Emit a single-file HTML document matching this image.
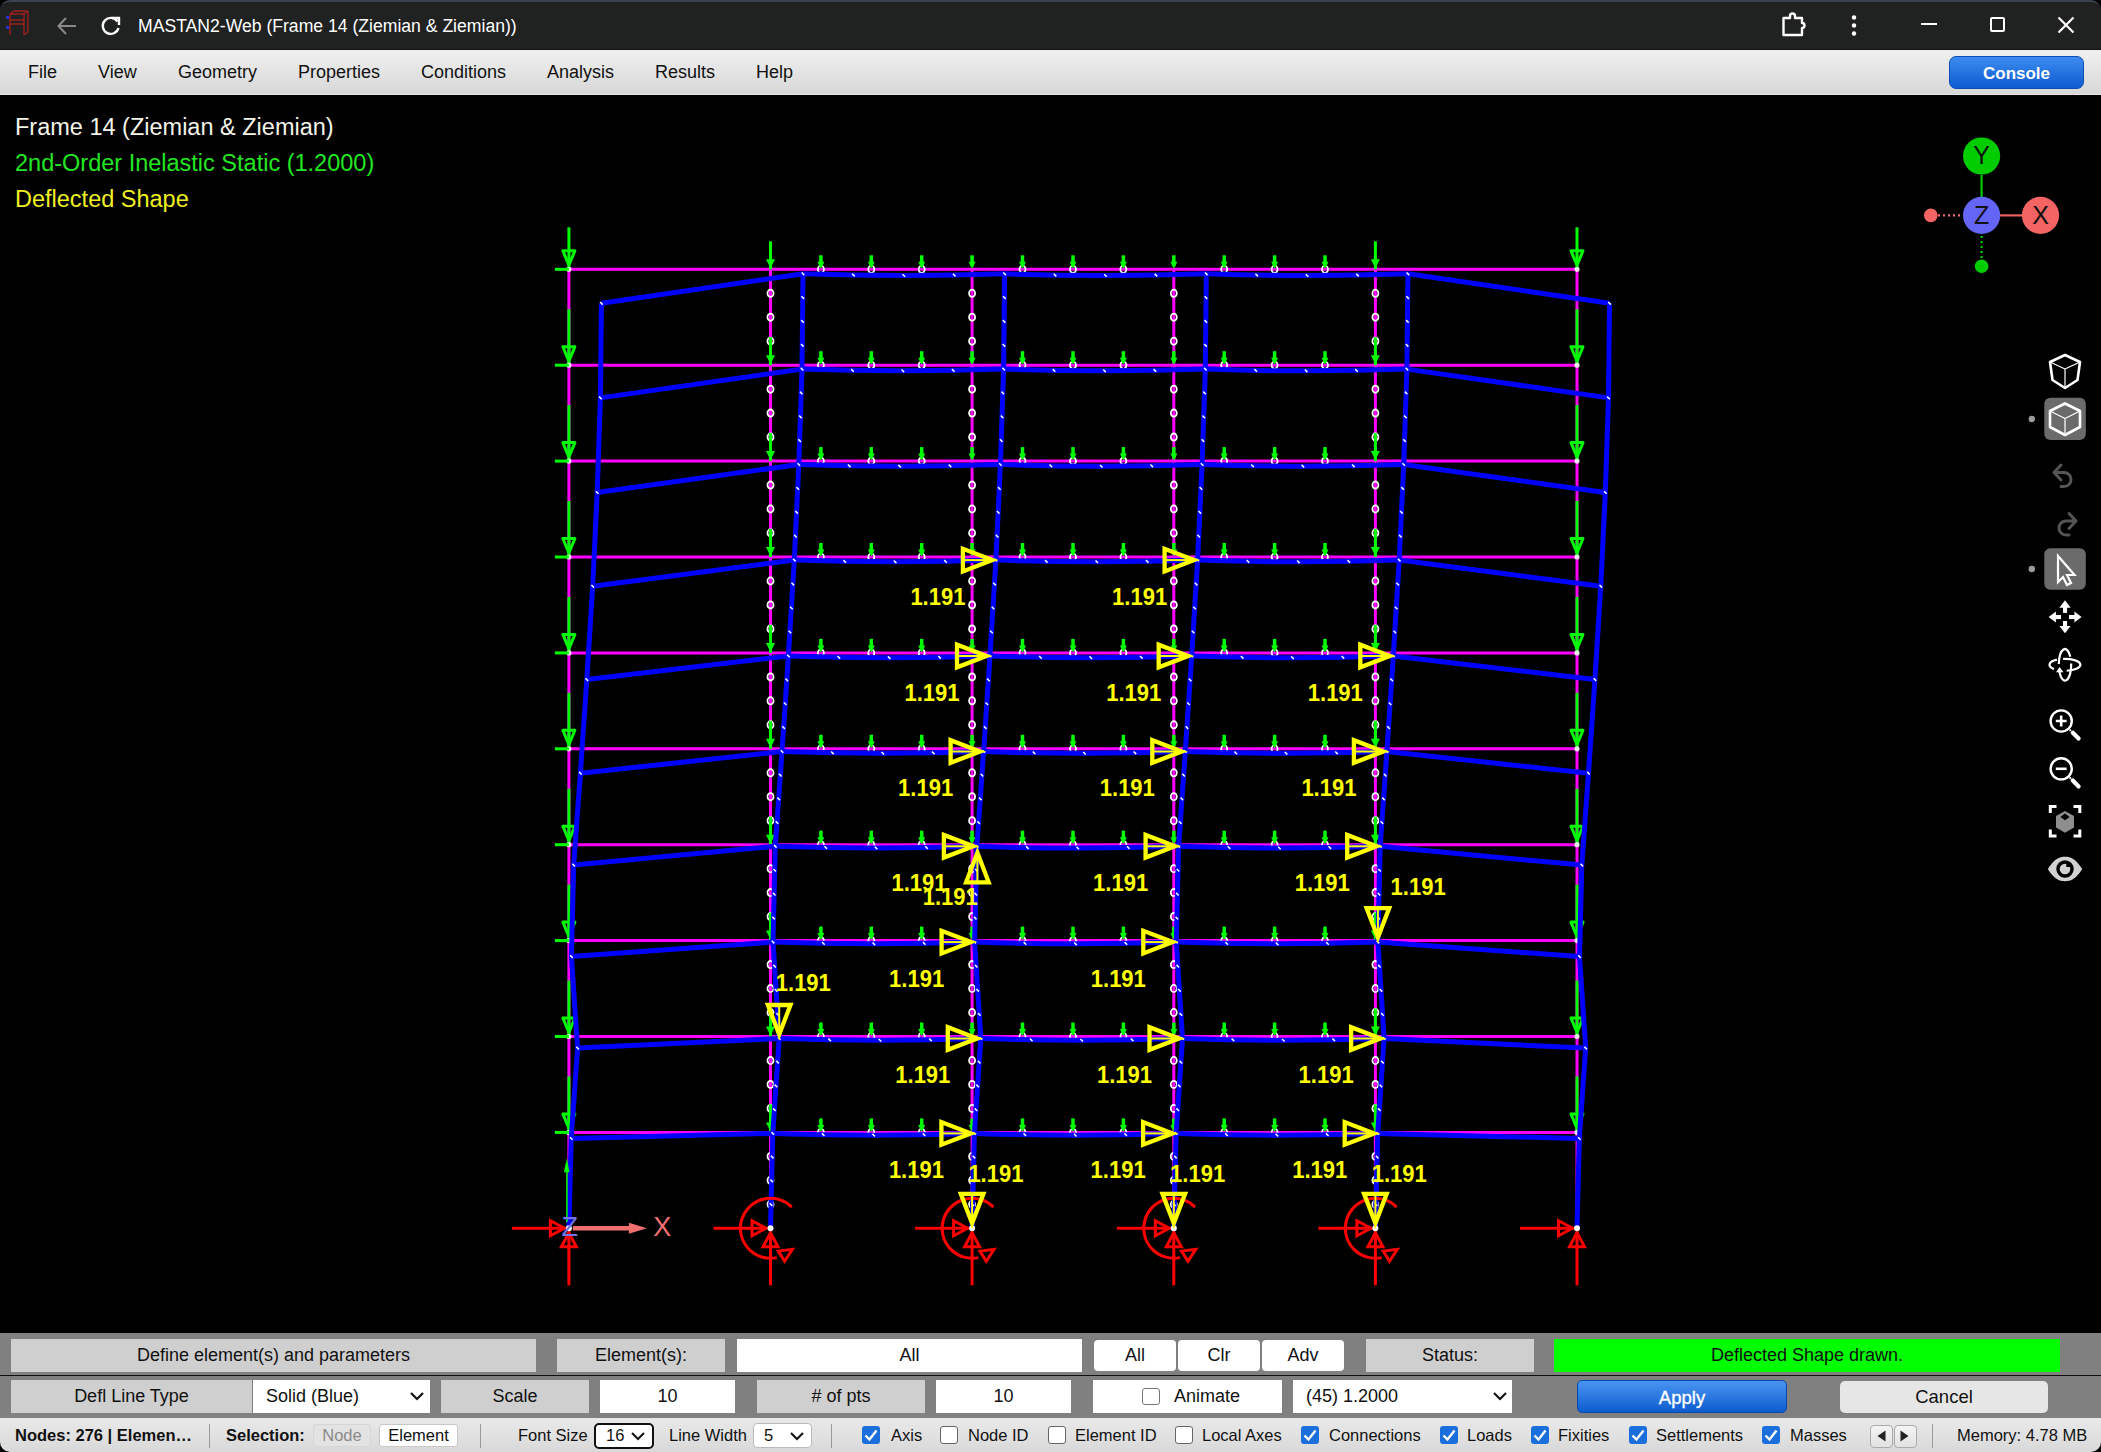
<!DOCTYPE html>
<html><head><meta charset="utf-8"><title>MASTAN2-Web</title>
<style>
*{box-sizing:border-box}
html,body{margin:0;padding:0}
body{width:2101px;height:1452px;overflow:hidden;background:#000;position:relative;font-family:"Liberation Sans",sans-serif}
.a{position:absolute}
#titlebar{left:0;top:0;width:2101px;height:50px;background:#202121;border-top:2px solid #3b4350;border-radius:10px 10px 0 0}
#tbline{left:0;top:49px;width:2101px;height:1px;background:#141414}
#title{left:138px;top:16px;color:#fff;font-size:17.6px;white-space:nowrap}
#menubar{left:0;top:50px;width:2101px;height:45px;background:linear-gradient(#f0f0f0,#d7d7d7);border-bottom:1px solid #e6e6e6}
.mi{position:absolute;top:12px;font-size:18px;color:#111;white-space:nowrap}
#console{left:1949px;top:56px;width:135px;height:33px;border-radius:7px;background:linear-gradient(#3d8bf0,#0d5bd0);border:1px solid #0b4fb5;color:#fff;font-weight:bold;font-size:17px;text-align:center;line-height:34px}
.info{position:absolute;left:15px;font-size:23.5px;white-space:nowrap}
#panel{left:0;top:1333px;width:2101px;height:85px;background:#808080}
#pline{left:0;top:1374.8px;width:2101px;height:1.4px;background:#111}
.cell{position:absolute;background:#cfcfcf;font-size:18px;color:#111;text-align:center;white-space:nowrap}
.inp{position:absolute;background:#fff;font-size:18px;color:#111;text-align:center;white-space:nowrap}
.btn{position:absolute;background:#fff;border-radius:4px;font-size:18px;color:#111;text-align:center;white-space:nowrap}
#status{left:0;top:1418px;width:2101px;height:34px;background:linear-gradient(#e9e9e9,#d9d9d9);border-radius:0 0 10px 10px}
.st{position:absolute;font-size:16.5px;color:#111;white-space:nowrap;top:1426px}
.cb{position:absolute;top:1426px;width:18px;height:18px;border-radius:3px;background:#1a6fdc}
.cbo{position:absolute;top:1426px;width:18px;height:18px;border-radius:3px;background:#fff;border:1.5px solid #666}
.sep{position:absolute;top:1424px;width:1px;height:24px;background:#9a9a9a}
</style></head>
<body>
<div id="titlebar" class="a"></div>
<div id="tbline" class="a"></div>
<!-- app icon -->
<svg class="a" style="left:6px;top:10px" width="26" height="28" viewBox="0 0 26 28">
<g stroke="#9c2020" stroke-width="1.4" fill="none">
<path d="M4 4 L18 4 L22 1 M18 4 L18 25 M4 4 L4 25 M4 14 L18 14 M4 10 L18 10 M22 1 L22 22 L18 25 M4 4 L8 1 L22 1"/>
</g>
<rect x="0" y="6" width="3" height="3" fill="#2233cc"/><rect x="0" y="16" width="3" height="3" fill="#2233cc"/>
</svg>
<!-- back arrow -->
<svg class="a" style="left:56px;top:16px" width="22" height="20" viewBox="0 0 22 20">
<path d="M20 10 H3 M10 2 L2.5 10 L10 18" stroke="#8a8a8a" stroke-width="2" fill="none"/>
</svg>
<!-- reload -->
<svg class="a" style="left:99px;top:15px" width="24" height="22" viewBox="0 0 24 22">
<path d="M18.5 6.5 A8 8 0 1 0 19.5 13" stroke="#fff" stroke-width="2.4" fill="none"/>
<path d="M13 3 H20 V10" stroke="#fff" stroke-width="2.4" fill="none"/>
</svg>
<div id="title" class="a">MASTAN2-Web (Frame 14 (Ziemian &amp; Ziemian))</div>
<!-- extensions icon -->
<svg class="a" style="left:1780px;top:11px" width="30" height="28" viewBox="0 0 30 28">
<path d="M3.5 7 H10 V5 A2.5 2.5 0 0 1 15 5 V7 H22 V12 A2.5 2.5 0 0 1 22 17 V24 H3.5 V17 A0 0 0 0 0 3.5 17 V7 Z" stroke="#fff" stroke-width="2.4" fill="none" stroke-linejoin="round"/>
</svg>
<!-- kebab -->
<svg class="a" style="left:1846px;top:14px" width="16" height="24" viewBox="0 0 16 24">
<circle cx="8" cy="3.5" r="2.2" fill="#fff"/><circle cx="8" cy="11.5" r="2.2" fill="#fff"/><circle cx="8" cy="19.5" r="2.2" fill="#fff"/>
</svg>
<!-- min max close -->
<div class="a" style="left:1921px;top:23px;width:16px;height:2px;background:#fff"></div>
<div class="a" style="left:1990px;top:17px;width:15px;height:15px;border:2px solid #fff;border-radius:2px"></div>
<svg class="a" style="left:2057px;top:16px" width="18" height="18" viewBox="0 0 18 18"><path d="M1.5 1.5 L16.5 16.5 M16.5 1.5 L1.5 16.5" stroke="#fff" stroke-width="2.2"/></svg>

<div id="menubar" class="a">
<span class="mi" style="left:28px">File</span>
<span class="mi" style="left:98px">View</span>
<span class="mi" style="left:178px">Geometry</span>
<span class="mi" style="left:298px">Properties</span>
<span class="mi" style="left:421px">Conditions</span>
<span class="mi" style="left:547px">Analysis</span>
<span class="mi" style="left:655px">Results</span>
<span class="mi" style="left:756px">Help</span>
</div>
<div id="console" class="a">Console</div>

<div class="info" style="top:113.5px;color:#f4f4e8">Frame 14 (Ziemian &amp; Ziemian)</div>
<div class="info" style="top:149.7px;color:#22e622">2nd-Order Inelastic Static (1.2000)</div>
<div class="info" style="top:186.4px;color:#f0f020">Deflected Shape</div>

<svg class="a" style="left:0;top:0" width="2101" height="1452" viewBox="0 0 2101 1452">
<line x1="568.9" y1="1132.4" x2="1577" y2="1132.4" stroke="#f0f" stroke-width="3"/>
<line x1="568.9" y1="1036.5" x2="1577" y2="1036.5" stroke="#f0f" stroke-width="3"/>
<line x1="568.9" y1="940.6" x2="1577" y2="940.6" stroke="#f0f" stroke-width="3"/>
<line x1="568.9" y1="844.7" x2="1577" y2="844.7" stroke="#f0f" stroke-width="3"/>
<line x1="568.9" y1="748.8" x2="1577" y2="748.8" stroke="#f0f" stroke-width="3"/>
<line x1="568.9" y1="652.9" x2="1577" y2="652.9" stroke="#f0f" stroke-width="3"/>
<line x1="568.9" y1="557" x2="1577" y2="557" stroke="#f0f" stroke-width="3"/>
<line x1="568.9" y1="461.1" x2="1577" y2="461.1" stroke="#f0f" stroke-width="3"/>
<line x1="568.9" y1="365.2" x2="1577" y2="365.2" stroke="#f0f" stroke-width="3"/>
<line x1="568.9" y1="269.3" x2="1577" y2="269.3" stroke="#f0f" stroke-width="3"/>
<line x1="568.9" y1="1228.3" x2="568.9" y2="269.3" stroke="#f0f" stroke-width="3"/>
<line x1="770.5" y1="1228.3" x2="770.5" y2="269.3" stroke="#f0f" stroke-width="3"/>
<line x1="972.1" y1="1228.3" x2="972.1" y2="269.3" stroke="#f0f" stroke-width="3"/>
<line x1="1173.8" y1="1228.3" x2="1173.8" y2="269.3" stroke="#f0f" stroke-width="3"/>
<line x1="1375.4" y1="1228.3" x2="1375.4" y2="269.3" stroke="#f0f" stroke-width="3"/>
<line x1="1577" y1="1228.3" x2="1577" y2="269.3" stroke="#f0f" stroke-width="3"/>
<ellipse cx="770.5" cy="1204.3" rx="3" ry="3.6" fill="none" stroke="#fff" stroke-width="1.8"/>
<ellipse cx="770.5" cy="1180.3" rx="3" ry="3.6" fill="none" stroke="#fff" stroke-width="1.8"/>
<ellipse cx="770.5" cy="1156.4" rx="3" ry="3.6" fill="none" stroke="#fff" stroke-width="1.8"/>
<ellipse cx="770.5" cy="1108.4" rx="3" ry="3.6" fill="none" stroke="#fff" stroke-width="1.8"/>
<ellipse cx="770.5" cy="1084.4" rx="3" ry="3.6" fill="none" stroke="#fff" stroke-width="1.8"/>
<ellipse cx="770.5" cy="1060.5" rx="3" ry="3.6" fill="none" stroke="#fff" stroke-width="1.8"/>
<ellipse cx="770.5" cy="1012.5" rx="3" ry="3.6" fill="none" stroke="#fff" stroke-width="1.8"/>
<ellipse cx="770.5" cy="988.5" rx="3" ry="3.6" fill="none" stroke="#fff" stroke-width="1.8"/>
<ellipse cx="770.5" cy="964.6" rx="3" ry="3.6" fill="none" stroke="#fff" stroke-width="1.8"/>
<ellipse cx="770.5" cy="916.6" rx="3" ry="3.6" fill="none" stroke="#fff" stroke-width="1.8"/>
<ellipse cx="770.5" cy="892.6" rx="3" ry="3.6" fill="none" stroke="#fff" stroke-width="1.8"/>
<ellipse cx="770.5" cy="868.7" rx="3" ry="3.6" fill="none" stroke="#fff" stroke-width="1.8"/>
<ellipse cx="770.5" cy="820.7" rx="3" ry="3.6" fill="none" stroke="#fff" stroke-width="1.8"/>
<ellipse cx="770.5" cy="796.7" rx="3" ry="3.6" fill="none" stroke="#fff" stroke-width="1.8"/>
<ellipse cx="770.5" cy="772.8" rx="3" ry="3.6" fill="none" stroke="#fff" stroke-width="1.8"/>
<ellipse cx="770.5" cy="724.8" rx="3" ry="3.6" fill="none" stroke="#fff" stroke-width="1.8"/>
<ellipse cx="770.5" cy="700.8" rx="3" ry="3.6" fill="none" stroke="#fff" stroke-width="1.8"/>
<ellipse cx="770.5" cy="676.9" rx="3" ry="3.6" fill="none" stroke="#fff" stroke-width="1.8"/>
<ellipse cx="770.5" cy="628.9" rx="3" ry="3.6" fill="none" stroke="#fff" stroke-width="1.8"/>
<ellipse cx="770.5" cy="604.9" rx="3" ry="3.6" fill="none" stroke="#fff" stroke-width="1.8"/>
<ellipse cx="770.5" cy="581" rx="3" ry="3.6" fill="none" stroke="#fff" stroke-width="1.8"/>
<ellipse cx="770.5" cy="533" rx="3" ry="3.6" fill="none" stroke="#fff" stroke-width="1.8"/>
<ellipse cx="770.5" cy="509" rx="3" ry="3.6" fill="none" stroke="#fff" stroke-width="1.8"/>
<ellipse cx="770.5" cy="485.1" rx="3" ry="3.6" fill="none" stroke="#fff" stroke-width="1.8"/>
<ellipse cx="770.5" cy="437.1" rx="3" ry="3.6" fill="none" stroke="#fff" stroke-width="1.8"/>
<ellipse cx="770.5" cy="413.1" rx="3" ry="3.6" fill="none" stroke="#fff" stroke-width="1.8"/>
<ellipse cx="770.5" cy="389.2" rx="3" ry="3.6" fill="none" stroke="#fff" stroke-width="1.8"/>
<ellipse cx="770.5" cy="341.2" rx="3" ry="3.6" fill="none" stroke="#fff" stroke-width="1.8"/>
<ellipse cx="770.5" cy="317.2" rx="3" ry="3.6" fill="none" stroke="#fff" stroke-width="1.8"/>
<ellipse cx="770.5" cy="293.3" rx="3" ry="3.6" fill="none" stroke="#fff" stroke-width="1.8"/>
<ellipse cx="972.1" cy="1204.3" rx="3" ry="3.6" fill="none" stroke="#fff" stroke-width="1.8"/>
<ellipse cx="972.1" cy="1180.3" rx="3" ry="3.6" fill="none" stroke="#fff" stroke-width="1.8"/>
<ellipse cx="972.1" cy="1156.4" rx="3" ry="3.6" fill="none" stroke="#fff" stroke-width="1.8"/>
<ellipse cx="972.1" cy="1108.4" rx="3" ry="3.6" fill="none" stroke="#fff" stroke-width="1.8"/>
<ellipse cx="972.1" cy="1084.4" rx="3" ry="3.6" fill="none" stroke="#fff" stroke-width="1.8"/>
<ellipse cx="972.1" cy="1060.5" rx="3" ry="3.6" fill="none" stroke="#fff" stroke-width="1.8"/>
<ellipse cx="972.1" cy="1012.5" rx="3" ry="3.6" fill="none" stroke="#fff" stroke-width="1.8"/>
<ellipse cx="972.1" cy="988.5" rx="3" ry="3.6" fill="none" stroke="#fff" stroke-width="1.8"/>
<ellipse cx="972.1" cy="964.6" rx="3" ry="3.6" fill="none" stroke="#fff" stroke-width="1.8"/>
<ellipse cx="972.1" cy="916.6" rx="3" ry="3.6" fill="none" stroke="#fff" stroke-width="1.8"/>
<ellipse cx="972.1" cy="892.6" rx="3" ry="3.6" fill="none" stroke="#fff" stroke-width="1.8"/>
<ellipse cx="972.1" cy="868.7" rx="3" ry="3.6" fill="none" stroke="#fff" stroke-width="1.8"/>
<ellipse cx="972.1" cy="820.7" rx="3" ry="3.6" fill="none" stroke="#fff" stroke-width="1.8"/>
<ellipse cx="972.1" cy="796.7" rx="3" ry="3.6" fill="none" stroke="#fff" stroke-width="1.8"/>
<ellipse cx="972.1" cy="772.8" rx="3" ry="3.6" fill="none" stroke="#fff" stroke-width="1.8"/>
<ellipse cx="972.1" cy="724.8" rx="3" ry="3.6" fill="none" stroke="#fff" stroke-width="1.8"/>
<ellipse cx="972.1" cy="700.8" rx="3" ry="3.6" fill="none" stroke="#fff" stroke-width="1.8"/>
<ellipse cx="972.1" cy="676.9" rx="3" ry="3.6" fill="none" stroke="#fff" stroke-width="1.8"/>
<ellipse cx="972.1" cy="628.9" rx="3" ry="3.6" fill="none" stroke="#fff" stroke-width="1.8"/>
<ellipse cx="972.1" cy="604.9" rx="3" ry="3.6" fill="none" stroke="#fff" stroke-width="1.8"/>
<ellipse cx="972.1" cy="581" rx="3" ry="3.6" fill="none" stroke="#fff" stroke-width="1.8"/>
<ellipse cx="972.1" cy="533" rx="3" ry="3.6" fill="none" stroke="#fff" stroke-width="1.8"/>
<ellipse cx="972.1" cy="509" rx="3" ry="3.6" fill="none" stroke="#fff" stroke-width="1.8"/>
<ellipse cx="972.1" cy="485.1" rx="3" ry="3.6" fill="none" stroke="#fff" stroke-width="1.8"/>
<ellipse cx="972.1" cy="437.1" rx="3" ry="3.6" fill="none" stroke="#fff" stroke-width="1.8"/>
<ellipse cx="972.1" cy="413.1" rx="3" ry="3.6" fill="none" stroke="#fff" stroke-width="1.8"/>
<ellipse cx="972.1" cy="389.2" rx="3" ry="3.6" fill="none" stroke="#fff" stroke-width="1.8"/>
<ellipse cx="972.1" cy="341.2" rx="3" ry="3.6" fill="none" stroke="#fff" stroke-width="1.8"/>
<ellipse cx="972.1" cy="317.2" rx="3" ry="3.6" fill="none" stroke="#fff" stroke-width="1.8"/>
<ellipse cx="972.1" cy="293.3" rx="3" ry="3.6" fill="none" stroke="#fff" stroke-width="1.8"/>
<ellipse cx="1173.8" cy="1204.3" rx="3" ry="3.6" fill="none" stroke="#fff" stroke-width="1.8"/>
<ellipse cx="1173.8" cy="1180.3" rx="3" ry="3.6" fill="none" stroke="#fff" stroke-width="1.8"/>
<ellipse cx="1173.8" cy="1156.4" rx="3" ry="3.6" fill="none" stroke="#fff" stroke-width="1.8"/>
<ellipse cx="1173.8" cy="1108.4" rx="3" ry="3.6" fill="none" stroke="#fff" stroke-width="1.8"/>
<ellipse cx="1173.8" cy="1084.4" rx="3" ry="3.6" fill="none" stroke="#fff" stroke-width="1.8"/>
<ellipse cx="1173.8" cy="1060.5" rx="3" ry="3.6" fill="none" stroke="#fff" stroke-width="1.8"/>
<ellipse cx="1173.8" cy="1012.5" rx="3" ry="3.6" fill="none" stroke="#fff" stroke-width="1.8"/>
<ellipse cx="1173.8" cy="988.5" rx="3" ry="3.6" fill="none" stroke="#fff" stroke-width="1.8"/>
<ellipse cx="1173.8" cy="964.6" rx="3" ry="3.6" fill="none" stroke="#fff" stroke-width="1.8"/>
<ellipse cx="1173.8" cy="916.6" rx="3" ry="3.6" fill="none" stroke="#fff" stroke-width="1.8"/>
<ellipse cx="1173.8" cy="892.6" rx="3" ry="3.6" fill="none" stroke="#fff" stroke-width="1.8"/>
<ellipse cx="1173.8" cy="868.7" rx="3" ry="3.6" fill="none" stroke="#fff" stroke-width="1.8"/>
<ellipse cx="1173.8" cy="820.7" rx="3" ry="3.6" fill="none" stroke="#fff" stroke-width="1.8"/>
<ellipse cx="1173.8" cy="796.7" rx="3" ry="3.6" fill="none" stroke="#fff" stroke-width="1.8"/>
<ellipse cx="1173.8" cy="772.8" rx="3" ry="3.6" fill="none" stroke="#fff" stroke-width="1.8"/>
<ellipse cx="1173.8" cy="724.8" rx="3" ry="3.6" fill="none" stroke="#fff" stroke-width="1.8"/>
<ellipse cx="1173.8" cy="700.8" rx="3" ry="3.6" fill="none" stroke="#fff" stroke-width="1.8"/>
<ellipse cx="1173.8" cy="676.9" rx="3" ry="3.6" fill="none" stroke="#fff" stroke-width="1.8"/>
<ellipse cx="1173.8" cy="628.9" rx="3" ry="3.6" fill="none" stroke="#fff" stroke-width="1.8"/>
<ellipse cx="1173.8" cy="604.9" rx="3" ry="3.6" fill="none" stroke="#fff" stroke-width="1.8"/>
<ellipse cx="1173.8" cy="581" rx="3" ry="3.6" fill="none" stroke="#fff" stroke-width="1.8"/>
<ellipse cx="1173.8" cy="533" rx="3" ry="3.6" fill="none" stroke="#fff" stroke-width="1.8"/>
<ellipse cx="1173.8" cy="509" rx="3" ry="3.6" fill="none" stroke="#fff" stroke-width="1.8"/>
<ellipse cx="1173.8" cy="485.1" rx="3" ry="3.6" fill="none" stroke="#fff" stroke-width="1.8"/>
<ellipse cx="1173.8" cy="437.1" rx="3" ry="3.6" fill="none" stroke="#fff" stroke-width="1.8"/>
<ellipse cx="1173.8" cy="413.1" rx="3" ry="3.6" fill="none" stroke="#fff" stroke-width="1.8"/>
<ellipse cx="1173.8" cy="389.2" rx="3" ry="3.6" fill="none" stroke="#fff" stroke-width="1.8"/>
<ellipse cx="1173.8" cy="341.2" rx="3" ry="3.6" fill="none" stroke="#fff" stroke-width="1.8"/>
<ellipse cx="1173.8" cy="317.2" rx="3" ry="3.6" fill="none" stroke="#fff" stroke-width="1.8"/>
<ellipse cx="1173.8" cy="293.3" rx="3" ry="3.6" fill="none" stroke="#fff" stroke-width="1.8"/>
<ellipse cx="1375.4" cy="1204.3" rx="3" ry="3.6" fill="none" stroke="#fff" stroke-width="1.8"/>
<ellipse cx="1375.4" cy="1180.3" rx="3" ry="3.6" fill="none" stroke="#fff" stroke-width="1.8"/>
<ellipse cx="1375.4" cy="1156.4" rx="3" ry="3.6" fill="none" stroke="#fff" stroke-width="1.8"/>
<ellipse cx="1375.4" cy="1108.4" rx="3" ry="3.6" fill="none" stroke="#fff" stroke-width="1.8"/>
<ellipse cx="1375.4" cy="1084.4" rx="3" ry="3.6" fill="none" stroke="#fff" stroke-width="1.8"/>
<ellipse cx="1375.4" cy="1060.5" rx="3" ry="3.6" fill="none" stroke="#fff" stroke-width="1.8"/>
<ellipse cx="1375.4" cy="1012.5" rx="3" ry="3.6" fill="none" stroke="#fff" stroke-width="1.8"/>
<ellipse cx="1375.4" cy="988.5" rx="3" ry="3.6" fill="none" stroke="#fff" stroke-width="1.8"/>
<ellipse cx="1375.4" cy="964.6" rx="3" ry="3.6" fill="none" stroke="#fff" stroke-width="1.8"/>
<ellipse cx="1375.4" cy="916.6" rx="3" ry="3.6" fill="none" stroke="#fff" stroke-width="1.8"/>
<ellipse cx="1375.4" cy="892.6" rx="3" ry="3.6" fill="none" stroke="#fff" stroke-width="1.8"/>
<ellipse cx="1375.4" cy="868.7" rx="3" ry="3.6" fill="none" stroke="#fff" stroke-width="1.8"/>
<ellipse cx="1375.4" cy="820.7" rx="3" ry="3.6" fill="none" stroke="#fff" stroke-width="1.8"/>
<ellipse cx="1375.4" cy="796.7" rx="3" ry="3.6" fill="none" stroke="#fff" stroke-width="1.8"/>
<ellipse cx="1375.4" cy="772.8" rx="3" ry="3.6" fill="none" stroke="#fff" stroke-width="1.8"/>
<ellipse cx="1375.4" cy="724.8" rx="3" ry="3.6" fill="none" stroke="#fff" stroke-width="1.8"/>
<ellipse cx="1375.4" cy="700.8" rx="3" ry="3.6" fill="none" stroke="#fff" stroke-width="1.8"/>
<ellipse cx="1375.4" cy="676.9" rx="3" ry="3.6" fill="none" stroke="#fff" stroke-width="1.8"/>
<ellipse cx="1375.4" cy="628.9" rx="3" ry="3.6" fill="none" stroke="#fff" stroke-width="1.8"/>
<ellipse cx="1375.4" cy="604.9" rx="3" ry="3.6" fill="none" stroke="#fff" stroke-width="1.8"/>
<ellipse cx="1375.4" cy="581" rx="3" ry="3.6" fill="none" stroke="#fff" stroke-width="1.8"/>
<ellipse cx="1375.4" cy="533" rx="3" ry="3.6" fill="none" stroke="#fff" stroke-width="1.8"/>
<ellipse cx="1375.4" cy="509" rx="3" ry="3.6" fill="none" stroke="#fff" stroke-width="1.8"/>
<ellipse cx="1375.4" cy="485.1" rx="3" ry="3.6" fill="none" stroke="#fff" stroke-width="1.8"/>
<ellipse cx="1375.4" cy="437.1" rx="3" ry="3.6" fill="none" stroke="#fff" stroke-width="1.8"/>
<ellipse cx="1375.4" cy="413.1" rx="3" ry="3.6" fill="none" stroke="#fff" stroke-width="1.8"/>
<ellipse cx="1375.4" cy="389.2" rx="3" ry="3.6" fill="none" stroke="#fff" stroke-width="1.8"/>
<ellipse cx="1375.4" cy="341.2" rx="3" ry="3.6" fill="none" stroke="#fff" stroke-width="1.8"/>
<ellipse cx="1375.4" cy="317.2" rx="3" ry="3.6" fill="none" stroke="#fff" stroke-width="1.8"/>
<ellipse cx="1375.4" cy="293.3" rx="3" ry="3.6" fill="none" stroke="#fff" stroke-width="1.8"/>
<ellipse cx="820.9" cy="1132.4" rx="3" ry="3.6" fill="none" stroke="#fff" stroke-width="1.8"/>
<ellipse cx="871.3" cy="1132.4" rx="3" ry="3.6" fill="none" stroke="#fff" stroke-width="1.8"/>
<ellipse cx="921.7" cy="1132.4" rx="3" ry="3.6" fill="none" stroke="#fff" stroke-width="1.8"/>
<ellipse cx="1022.5" cy="1132.4" rx="3" ry="3.6" fill="none" stroke="#fff" stroke-width="1.8"/>
<ellipse cx="1073" cy="1132.4" rx="3" ry="3.6" fill="none" stroke="#fff" stroke-width="1.8"/>
<ellipse cx="1123.4" cy="1132.4" rx="3" ry="3.6" fill="none" stroke="#fff" stroke-width="1.8"/>
<ellipse cx="1224.2" cy="1132.4" rx="3" ry="3.6" fill="none" stroke="#fff" stroke-width="1.8"/>
<ellipse cx="1274.6" cy="1132.4" rx="3" ry="3.6" fill="none" stroke="#fff" stroke-width="1.8"/>
<ellipse cx="1325" cy="1132.4" rx="3" ry="3.6" fill="none" stroke="#fff" stroke-width="1.8"/>
<ellipse cx="820.9" cy="1036.5" rx="3" ry="3.6" fill="none" stroke="#fff" stroke-width="1.8"/>
<ellipse cx="871.3" cy="1036.5" rx="3" ry="3.6" fill="none" stroke="#fff" stroke-width="1.8"/>
<ellipse cx="921.7" cy="1036.5" rx="3" ry="3.6" fill="none" stroke="#fff" stroke-width="1.8"/>
<ellipse cx="1022.5" cy="1036.5" rx="3" ry="3.6" fill="none" stroke="#fff" stroke-width="1.8"/>
<ellipse cx="1073" cy="1036.5" rx="3" ry="3.6" fill="none" stroke="#fff" stroke-width="1.8"/>
<ellipse cx="1123.4" cy="1036.5" rx="3" ry="3.6" fill="none" stroke="#fff" stroke-width="1.8"/>
<ellipse cx="1224.2" cy="1036.5" rx="3" ry="3.6" fill="none" stroke="#fff" stroke-width="1.8"/>
<ellipse cx="1274.6" cy="1036.5" rx="3" ry="3.6" fill="none" stroke="#fff" stroke-width="1.8"/>
<ellipse cx="1325" cy="1036.5" rx="3" ry="3.6" fill="none" stroke="#fff" stroke-width="1.8"/>
<ellipse cx="820.9" cy="940.6" rx="3" ry="3.6" fill="none" stroke="#fff" stroke-width="1.8"/>
<ellipse cx="871.3" cy="940.6" rx="3" ry="3.6" fill="none" stroke="#fff" stroke-width="1.8"/>
<ellipse cx="921.7" cy="940.6" rx="3" ry="3.6" fill="none" stroke="#fff" stroke-width="1.8"/>
<ellipse cx="1022.5" cy="940.6" rx="3" ry="3.6" fill="none" stroke="#fff" stroke-width="1.8"/>
<ellipse cx="1073" cy="940.6" rx="3" ry="3.6" fill="none" stroke="#fff" stroke-width="1.8"/>
<ellipse cx="1123.4" cy="940.6" rx="3" ry="3.6" fill="none" stroke="#fff" stroke-width="1.8"/>
<ellipse cx="1224.2" cy="940.6" rx="3" ry="3.6" fill="none" stroke="#fff" stroke-width="1.8"/>
<ellipse cx="1274.6" cy="940.6" rx="3" ry="3.6" fill="none" stroke="#fff" stroke-width="1.8"/>
<ellipse cx="1325" cy="940.6" rx="3" ry="3.6" fill="none" stroke="#fff" stroke-width="1.8"/>
<ellipse cx="820.9" cy="844.7" rx="3" ry="3.6" fill="none" stroke="#fff" stroke-width="1.8"/>
<ellipse cx="871.3" cy="844.7" rx="3" ry="3.6" fill="none" stroke="#fff" stroke-width="1.8"/>
<ellipse cx="921.7" cy="844.7" rx="3" ry="3.6" fill="none" stroke="#fff" stroke-width="1.8"/>
<ellipse cx="1022.5" cy="844.7" rx="3" ry="3.6" fill="none" stroke="#fff" stroke-width="1.8"/>
<ellipse cx="1073" cy="844.7" rx="3" ry="3.6" fill="none" stroke="#fff" stroke-width="1.8"/>
<ellipse cx="1123.4" cy="844.7" rx="3" ry="3.6" fill="none" stroke="#fff" stroke-width="1.8"/>
<ellipse cx="1224.2" cy="844.7" rx="3" ry="3.6" fill="none" stroke="#fff" stroke-width="1.8"/>
<ellipse cx="1274.6" cy="844.7" rx="3" ry="3.6" fill="none" stroke="#fff" stroke-width="1.8"/>
<ellipse cx="1325" cy="844.7" rx="3" ry="3.6" fill="none" stroke="#fff" stroke-width="1.8"/>
<ellipse cx="820.9" cy="748.8" rx="3" ry="3.6" fill="none" stroke="#fff" stroke-width="1.8"/>
<ellipse cx="871.3" cy="748.8" rx="3" ry="3.6" fill="none" stroke="#fff" stroke-width="1.8"/>
<ellipse cx="921.7" cy="748.8" rx="3" ry="3.6" fill="none" stroke="#fff" stroke-width="1.8"/>
<ellipse cx="1022.5" cy="748.8" rx="3" ry="3.6" fill="none" stroke="#fff" stroke-width="1.8"/>
<ellipse cx="1073" cy="748.8" rx="3" ry="3.6" fill="none" stroke="#fff" stroke-width="1.8"/>
<ellipse cx="1123.4" cy="748.8" rx="3" ry="3.6" fill="none" stroke="#fff" stroke-width="1.8"/>
<ellipse cx="1224.2" cy="748.8" rx="3" ry="3.6" fill="none" stroke="#fff" stroke-width="1.8"/>
<ellipse cx="1274.6" cy="748.8" rx="3" ry="3.6" fill="none" stroke="#fff" stroke-width="1.8"/>
<ellipse cx="1325" cy="748.8" rx="3" ry="3.6" fill="none" stroke="#fff" stroke-width="1.8"/>
<ellipse cx="820.9" cy="652.9" rx="3" ry="3.6" fill="none" stroke="#fff" stroke-width="1.8"/>
<ellipse cx="871.3" cy="652.9" rx="3" ry="3.6" fill="none" stroke="#fff" stroke-width="1.8"/>
<ellipse cx="921.7" cy="652.9" rx="3" ry="3.6" fill="none" stroke="#fff" stroke-width="1.8"/>
<ellipse cx="1022.5" cy="652.9" rx="3" ry="3.6" fill="none" stroke="#fff" stroke-width="1.8"/>
<ellipse cx="1073" cy="652.9" rx="3" ry="3.6" fill="none" stroke="#fff" stroke-width="1.8"/>
<ellipse cx="1123.4" cy="652.9" rx="3" ry="3.6" fill="none" stroke="#fff" stroke-width="1.8"/>
<ellipse cx="1224.2" cy="652.9" rx="3" ry="3.6" fill="none" stroke="#fff" stroke-width="1.8"/>
<ellipse cx="1274.6" cy="652.9" rx="3" ry="3.6" fill="none" stroke="#fff" stroke-width="1.8"/>
<ellipse cx="1325" cy="652.9" rx="3" ry="3.6" fill="none" stroke="#fff" stroke-width="1.8"/>
<ellipse cx="820.9" cy="557" rx="3" ry="3.6" fill="none" stroke="#fff" stroke-width="1.8"/>
<ellipse cx="871.3" cy="557" rx="3" ry="3.6" fill="none" stroke="#fff" stroke-width="1.8"/>
<ellipse cx="921.7" cy="557" rx="3" ry="3.6" fill="none" stroke="#fff" stroke-width="1.8"/>
<ellipse cx="1022.5" cy="557" rx="3" ry="3.6" fill="none" stroke="#fff" stroke-width="1.8"/>
<ellipse cx="1073" cy="557" rx="3" ry="3.6" fill="none" stroke="#fff" stroke-width="1.8"/>
<ellipse cx="1123.4" cy="557" rx="3" ry="3.6" fill="none" stroke="#fff" stroke-width="1.8"/>
<ellipse cx="1224.2" cy="557" rx="3" ry="3.6" fill="none" stroke="#fff" stroke-width="1.8"/>
<ellipse cx="1274.6" cy="557" rx="3" ry="3.6" fill="none" stroke="#fff" stroke-width="1.8"/>
<ellipse cx="1325" cy="557" rx="3" ry="3.6" fill="none" stroke="#fff" stroke-width="1.8"/>
<ellipse cx="820.9" cy="461.1" rx="3" ry="3.6" fill="none" stroke="#fff" stroke-width="1.8"/>
<ellipse cx="871.3" cy="461.1" rx="3" ry="3.6" fill="none" stroke="#fff" stroke-width="1.8"/>
<ellipse cx="921.7" cy="461.1" rx="3" ry="3.6" fill="none" stroke="#fff" stroke-width="1.8"/>
<ellipse cx="1022.5" cy="461.1" rx="3" ry="3.6" fill="none" stroke="#fff" stroke-width="1.8"/>
<ellipse cx="1073" cy="461.1" rx="3" ry="3.6" fill="none" stroke="#fff" stroke-width="1.8"/>
<ellipse cx="1123.4" cy="461.1" rx="3" ry="3.6" fill="none" stroke="#fff" stroke-width="1.8"/>
<ellipse cx="1224.2" cy="461.1" rx="3" ry="3.6" fill="none" stroke="#fff" stroke-width="1.8"/>
<ellipse cx="1274.6" cy="461.1" rx="3" ry="3.6" fill="none" stroke="#fff" stroke-width="1.8"/>
<ellipse cx="1325" cy="461.1" rx="3" ry="3.6" fill="none" stroke="#fff" stroke-width="1.8"/>
<ellipse cx="820.9" cy="365.2" rx="3" ry="3.6" fill="none" stroke="#fff" stroke-width="1.8"/>
<ellipse cx="871.3" cy="365.2" rx="3" ry="3.6" fill="none" stroke="#fff" stroke-width="1.8"/>
<ellipse cx="921.7" cy="365.2" rx="3" ry="3.6" fill="none" stroke="#fff" stroke-width="1.8"/>
<ellipse cx="1022.5" cy="365.2" rx="3" ry="3.6" fill="none" stroke="#fff" stroke-width="1.8"/>
<ellipse cx="1073" cy="365.2" rx="3" ry="3.6" fill="none" stroke="#fff" stroke-width="1.8"/>
<ellipse cx="1123.4" cy="365.2" rx="3" ry="3.6" fill="none" stroke="#fff" stroke-width="1.8"/>
<ellipse cx="1224.2" cy="365.2" rx="3" ry="3.6" fill="none" stroke="#fff" stroke-width="1.8"/>
<ellipse cx="1274.6" cy="365.2" rx="3" ry="3.6" fill="none" stroke="#fff" stroke-width="1.8"/>
<ellipse cx="1325" cy="365.2" rx="3" ry="3.6" fill="none" stroke="#fff" stroke-width="1.8"/>
<ellipse cx="820.9" cy="269.3" rx="3" ry="3.6" fill="none" stroke="#fff" stroke-width="1.8"/>
<ellipse cx="871.3" cy="269.3" rx="3" ry="3.6" fill="none" stroke="#fff" stroke-width="1.8"/>
<ellipse cx="921.7" cy="269.3" rx="3" ry="3.6" fill="none" stroke="#fff" stroke-width="1.8"/>
<ellipse cx="1022.5" cy="269.3" rx="3" ry="3.6" fill="none" stroke="#fff" stroke-width="1.8"/>
<ellipse cx="1073" cy="269.3" rx="3" ry="3.6" fill="none" stroke="#fff" stroke-width="1.8"/>
<ellipse cx="1123.4" cy="269.3" rx="3" ry="3.6" fill="none" stroke="#fff" stroke-width="1.8"/>
<ellipse cx="1224.2" cy="269.3" rx="3" ry="3.6" fill="none" stroke="#fff" stroke-width="1.8"/>
<ellipse cx="1274.6" cy="269.3" rx="3" ry="3.6" fill="none" stroke="#fff" stroke-width="1.8"/>
<ellipse cx="1325" cy="269.3" rx="3" ry="3.6" fill="none" stroke="#fff" stroke-width="1.8"/>
<line x1="568.9" y1="1076.4" x2="568.9" y2="1132.4" stroke="#0f0" stroke-width="3"/>
<path d="M562.9 1113.9 L574.9 1113.9 L568.9 1128.4 Z" fill="none" stroke="#0f0" stroke-width="3" stroke-linejoin="round"/>
<circle cx="568.9" cy="1132.4" r="2.6" fill="#fff" opacity="0.85"/>
<line x1="554.9" y1="1132.4" x2="568.9" y2="1132.4" stroke="#0f0" stroke-width="3"/>
<line x1="568.9" y1="980.5" x2="568.9" y2="1036.5" stroke="#0f0" stroke-width="3"/>
<path d="M562.9 1018 L574.9 1018 L568.9 1032.5 Z" fill="none" stroke="#0f0" stroke-width="3" stroke-linejoin="round"/>
<circle cx="568.9" cy="1036.5" r="2.6" fill="#fff" opacity="0.85"/>
<line x1="554.9" y1="1036.5" x2="568.9" y2="1036.5" stroke="#0f0" stroke-width="3"/>
<line x1="568.9" y1="884.6" x2="568.9" y2="940.6" stroke="#0f0" stroke-width="3"/>
<path d="M562.9 922.1 L574.9 922.1 L568.9 936.6 Z" fill="none" stroke="#0f0" stroke-width="3" stroke-linejoin="round"/>
<circle cx="568.9" cy="940.6" r="2.6" fill="#fff" opacity="0.85"/>
<line x1="554.9" y1="940.6" x2="568.9" y2="940.6" stroke="#0f0" stroke-width="3"/>
<line x1="568.9" y1="788.7" x2="568.9" y2="844.7" stroke="#0f0" stroke-width="3"/>
<path d="M562.9 826.2 L574.9 826.2 L568.9 840.7 Z" fill="none" stroke="#0f0" stroke-width="3" stroke-linejoin="round"/>
<circle cx="568.9" cy="844.7" r="2.6" fill="#fff" opacity="0.85"/>
<line x1="554.9" y1="844.7" x2="568.9" y2="844.7" stroke="#0f0" stroke-width="3"/>
<line x1="568.9" y1="692.8" x2="568.9" y2="748.8" stroke="#0f0" stroke-width="3"/>
<path d="M562.9 730.3 L574.9 730.3 L568.9 744.8 Z" fill="none" stroke="#0f0" stroke-width="3" stroke-linejoin="round"/>
<circle cx="568.9" cy="748.8" r="2.6" fill="#fff" opacity="0.85"/>
<line x1="554.9" y1="748.8" x2="568.9" y2="748.8" stroke="#0f0" stroke-width="3"/>
<line x1="568.9" y1="596.9" x2="568.9" y2="652.9" stroke="#0f0" stroke-width="3"/>
<path d="M562.9 634.4 L574.9 634.4 L568.9 648.9 Z" fill="none" stroke="#0f0" stroke-width="3" stroke-linejoin="round"/>
<circle cx="568.9" cy="652.9" r="2.6" fill="#fff" opacity="0.85"/>
<line x1="554.9" y1="652.9" x2="568.9" y2="652.9" stroke="#0f0" stroke-width="3"/>
<line x1="568.9" y1="501" x2="568.9" y2="557" stroke="#0f0" stroke-width="3"/>
<path d="M562.9 538.5 L574.9 538.5 L568.9 553 Z" fill="none" stroke="#0f0" stroke-width="3" stroke-linejoin="round"/>
<circle cx="568.9" cy="557" r="2.6" fill="#fff" opacity="0.85"/>
<line x1="554.9" y1="557" x2="568.9" y2="557" stroke="#0f0" stroke-width="3"/>
<line x1="568.9" y1="405.1" x2="568.9" y2="461.1" stroke="#0f0" stroke-width="3"/>
<path d="M562.9 442.6 L574.9 442.6 L568.9 457.1 Z" fill="none" stroke="#0f0" stroke-width="3" stroke-linejoin="round"/>
<circle cx="568.9" cy="461.1" r="2.6" fill="#fff" opacity="0.85"/>
<line x1="554.9" y1="461.1" x2="568.9" y2="461.1" stroke="#0f0" stroke-width="3"/>
<line x1="568.9" y1="309.2" x2="568.9" y2="365.2" stroke="#0f0" stroke-width="3"/>
<path d="M562.9 346.7 L574.9 346.7 L568.9 361.2 Z" fill="none" stroke="#0f0" stroke-width="3" stroke-linejoin="round"/>
<circle cx="568.9" cy="365.2" r="2.6" fill="#fff" opacity="0.85"/>
<line x1="554.9" y1="365.2" x2="568.9" y2="365.2" stroke="#0f0" stroke-width="3"/>
<line x1="568.9" y1="227.3" x2="568.9" y2="269.3" stroke="#0f0" stroke-width="3"/>
<path d="M562.9 250.8 L574.9 250.8 L568.9 265.3 Z" fill="none" stroke="#0f0" stroke-width="3" stroke-linejoin="round"/>
<circle cx="568.9" cy="269.3" r="2.6" fill="#fff" opacity="0.85"/>
<line x1="554.9" y1="269.3" x2="568.9" y2="269.3" stroke="#0f0" stroke-width="3"/>
<line x1="1577" y1="1076.4" x2="1577" y2="1132.4" stroke="#0f0" stroke-width="3"/>
<path d="M1571 1113.9 L1583 1113.9 L1577 1128.4 Z" fill="none" stroke="#0f0" stroke-width="3" stroke-linejoin="round"/>
<circle cx="1577" cy="1132.4" r="2.6" fill="#fff" opacity="0.85"/>
<line x1="1577" y1="980.5" x2="1577" y2="1036.5" stroke="#0f0" stroke-width="3"/>
<path d="M1571 1018 L1583 1018 L1577 1032.5 Z" fill="none" stroke="#0f0" stroke-width="3" stroke-linejoin="round"/>
<circle cx="1577" cy="1036.5" r="2.6" fill="#fff" opacity="0.85"/>
<line x1="1577" y1="884.6" x2="1577" y2="940.6" stroke="#0f0" stroke-width="3"/>
<path d="M1571 922.1 L1583 922.1 L1577 936.6 Z" fill="none" stroke="#0f0" stroke-width="3" stroke-linejoin="round"/>
<circle cx="1577" cy="940.6" r="2.6" fill="#fff" opacity="0.85"/>
<line x1="1577" y1="788.7" x2="1577" y2="844.7" stroke="#0f0" stroke-width="3"/>
<path d="M1571 826.2 L1583 826.2 L1577 840.7 Z" fill="none" stroke="#0f0" stroke-width="3" stroke-linejoin="round"/>
<circle cx="1577" cy="844.7" r="2.6" fill="#fff" opacity="0.85"/>
<line x1="1577" y1="692.8" x2="1577" y2="748.8" stroke="#0f0" stroke-width="3"/>
<path d="M1571 730.3 L1583 730.3 L1577 744.8 Z" fill="none" stroke="#0f0" stroke-width="3" stroke-linejoin="round"/>
<circle cx="1577" cy="748.8" r="2.6" fill="#fff" opacity="0.85"/>
<line x1="1577" y1="596.9" x2="1577" y2="652.9" stroke="#0f0" stroke-width="3"/>
<path d="M1571 634.4 L1583 634.4 L1577 648.9 Z" fill="none" stroke="#0f0" stroke-width="3" stroke-linejoin="round"/>
<circle cx="1577" cy="652.9" r="2.6" fill="#fff" opacity="0.85"/>
<line x1="1577" y1="501" x2="1577" y2="557" stroke="#0f0" stroke-width="3"/>
<path d="M1571 538.5 L1583 538.5 L1577 553 Z" fill="none" stroke="#0f0" stroke-width="3" stroke-linejoin="round"/>
<circle cx="1577" cy="557" r="2.6" fill="#fff" opacity="0.85"/>
<line x1="1577" y1="405.1" x2="1577" y2="461.1" stroke="#0f0" stroke-width="3"/>
<path d="M1571 442.6 L1583 442.6 L1577 457.1 Z" fill="none" stroke="#0f0" stroke-width="3" stroke-linejoin="round"/>
<circle cx="1577" cy="461.1" r="2.6" fill="#fff" opacity="0.85"/>
<line x1="1577" y1="309.2" x2="1577" y2="365.2" stroke="#0f0" stroke-width="3"/>
<path d="M1571 346.7 L1583 346.7 L1577 361.2 Z" fill="none" stroke="#0f0" stroke-width="3" stroke-linejoin="round"/>
<circle cx="1577" cy="365.2" r="2.6" fill="#fff" opacity="0.85"/>
<line x1="1577" y1="227.3" x2="1577" y2="269.3" stroke="#0f0" stroke-width="3"/>
<path d="M1571 250.8 L1583 250.8 L1577 265.3 Z" fill="none" stroke="#0f0" stroke-width="3" stroke-linejoin="round"/>
<circle cx="1577" cy="269.3" r="2.6" fill="#fff" opacity="0.85"/>
<line x1="770.5" y1="1104.4" x2="770.5" y2="1132.4" stroke="#0f0" stroke-width="3"/>
<path d="M766 1122.4 L775 1122.4 L770.5 1131.4 Z" fill="#0f0"/>
<line x1="770.5" y1="1008.5" x2="770.5" y2="1036.5" stroke="#0f0" stroke-width="3"/>
<path d="M766 1026.5 L775 1026.5 L770.5 1035.5 Z" fill="#0f0"/>
<line x1="770.5" y1="912.6" x2="770.5" y2="940.6" stroke="#0f0" stroke-width="3"/>
<path d="M766 930.6 L775 930.6 L770.5 939.6 Z" fill="#0f0"/>
<line x1="770.5" y1="816.7" x2="770.5" y2="844.7" stroke="#0f0" stroke-width="3"/>
<path d="M766 834.7 L775 834.7 L770.5 843.7 Z" fill="#0f0"/>
<line x1="770.5" y1="720.8" x2="770.5" y2="748.8" stroke="#0f0" stroke-width="3"/>
<path d="M766 738.8 L775 738.8 L770.5 747.8 Z" fill="#0f0"/>
<line x1="770.5" y1="624.9" x2="770.5" y2="652.9" stroke="#0f0" stroke-width="3"/>
<path d="M766 642.9 L775 642.9 L770.5 651.9 Z" fill="#0f0"/>
<line x1="770.5" y1="529" x2="770.5" y2="557" stroke="#0f0" stroke-width="3"/>
<path d="M766 547 L775 547 L770.5 556 Z" fill="#0f0"/>
<line x1="770.5" y1="433.1" x2="770.5" y2="461.1" stroke="#0f0" stroke-width="3"/>
<path d="M766 451.1 L775 451.1 L770.5 460.1 Z" fill="#0f0"/>
<line x1="770.5" y1="337.2" x2="770.5" y2="365.2" stroke="#0f0" stroke-width="3"/>
<path d="M766 355.2 L775 355.2 L770.5 364.2 Z" fill="#0f0"/>
<line x1="770.5" y1="241.3" x2="770.5" y2="269.3" stroke="#0f0" stroke-width="3"/>
<path d="M766 259.3 L775 259.3 L770.5 268.3 Z" fill="#0f0"/>
<line x1="1375.4" y1="1104.4" x2="1375.4" y2="1132.4" stroke="#0f0" stroke-width="3"/>
<path d="M1370.9 1122.4 L1379.9 1122.4 L1375.4 1131.4 Z" fill="#0f0"/>
<line x1="1375.4" y1="1008.5" x2="1375.4" y2="1036.5" stroke="#0f0" stroke-width="3"/>
<path d="M1370.9 1026.5 L1379.9 1026.5 L1375.4 1035.5 Z" fill="#0f0"/>
<line x1="1375.4" y1="912.6" x2="1375.4" y2="940.6" stroke="#0f0" stroke-width="3"/>
<path d="M1370.9 930.6 L1379.9 930.6 L1375.4 939.6 Z" fill="#0f0"/>
<line x1="1375.4" y1="816.7" x2="1375.4" y2="844.7" stroke="#0f0" stroke-width="3"/>
<path d="M1370.9 834.7 L1379.9 834.7 L1375.4 843.7 Z" fill="#0f0"/>
<line x1="1375.4" y1="720.8" x2="1375.4" y2="748.8" stroke="#0f0" stroke-width="3"/>
<path d="M1370.9 738.8 L1379.9 738.8 L1375.4 747.8 Z" fill="#0f0"/>
<line x1="1375.4" y1="624.9" x2="1375.4" y2="652.9" stroke="#0f0" stroke-width="3"/>
<path d="M1370.9 642.9 L1379.9 642.9 L1375.4 651.9 Z" fill="#0f0"/>
<line x1="1375.4" y1="529" x2="1375.4" y2="557" stroke="#0f0" stroke-width="3"/>
<path d="M1370.9 547 L1379.9 547 L1375.4 556 Z" fill="#0f0"/>
<line x1="1375.4" y1="433.1" x2="1375.4" y2="461.1" stroke="#0f0" stroke-width="3"/>
<path d="M1370.9 451.1 L1379.9 451.1 L1375.4 460.1 Z" fill="#0f0"/>
<line x1="1375.4" y1="337.2" x2="1375.4" y2="365.2" stroke="#0f0" stroke-width="3"/>
<path d="M1370.9 355.2 L1379.9 355.2 L1375.4 364.2 Z" fill="#0f0"/>
<line x1="1375.4" y1="241.3" x2="1375.4" y2="269.3" stroke="#0f0" stroke-width="3"/>
<path d="M1370.9 259.3 L1379.9 259.3 L1375.4 268.3 Z" fill="#0f0"/>
<line x1="820.9" y1="1118.4" x2="820.9" y2="1129.4" stroke="#0f0" stroke-width="3.5"/>
<path d="M817.4 1124.9 L824.4 1124.9 L820.9 1131.9 Z" fill="#0f0"/>
<line x1="871.3" y1="1118.4" x2="871.3" y2="1129.4" stroke="#0f0" stroke-width="3.5"/>
<path d="M867.8 1124.9 L874.8 1124.9 L871.3 1131.9 Z" fill="#0f0"/>
<line x1="921.7" y1="1118.4" x2="921.7" y2="1129.4" stroke="#0f0" stroke-width="3.5"/>
<path d="M918.2 1124.9 L925.2 1124.9 L921.7 1131.9 Z" fill="#0f0"/>
<line x1="1022.5" y1="1118.4" x2="1022.5" y2="1129.4" stroke="#0f0" stroke-width="3.5"/>
<path d="M1019 1124.9 L1026 1124.9 L1022.5 1131.9 Z" fill="#0f0"/>
<line x1="1073" y1="1118.4" x2="1073" y2="1129.4" stroke="#0f0" stroke-width="3.5"/>
<path d="M1069.5 1124.9 L1076.5 1124.9 L1073 1131.9 Z" fill="#0f0"/>
<line x1="1123.4" y1="1118.4" x2="1123.4" y2="1129.4" stroke="#0f0" stroke-width="3.5"/>
<path d="M1119.9 1124.9 L1126.9 1124.9 L1123.4 1131.9 Z" fill="#0f0"/>
<line x1="1224.2" y1="1118.4" x2="1224.2" y2="1129.4" stroke="#0f0" stroke-width="3.5"/>
<path d="M1220.7 1124.9 L1227.7 1124.9 L1224.2 1131.9 Z" fill="#0f0"/>
<line x1="1274.6" y1="1118.4" x2="1274.6" y2="1129.4" stroke="#0f0" stroke-width="3.5"/>
<path d="M1271.1 1124.9 L1278.1 1124.9 L1274.6 1131.9 Z" fill="#0f0"/>
<line x1="1325" y1="1118.4" x2="1325" y2="1129.4" stroke="#0f0" stroke-width="3.5"/>
<path d="M1321.5 1124.9 L1328.5 1124.9 L1325 1131.9 Z" fill="#0f0"/>
<line x1="972.1" y1="1118.4" x2="972.1" y2="1129.4" stroke="#0f0" stroke-width="3.5"/>
<path d="M968.6 1124.9 L975.6 1124.9 L972.1 1131.9 Z" fill="#0f0"/>
<line x1="1173.8" y1="1118.4" x2="1173.8" y2="1129.4" stroke="#0f0" stroke-width="3.5"/>
<path d="M1170.3 1124.9 L1177.3 1124.9 L1173.8 1131.9 Z" fill="#0f0"/>
<line x1="820.9" y1="1022.5" x2="820.9" y2="1033.5" stroke="#0f0" stroke-width="3.5"/>
<path d="M817.4 1029 L824.4 1029 L820.9 1036 Z" fill="#0f0"/>
<line x1="871.3" y1="1022.5" x2="871.3" y2="1033.5" stroke="#0f0" stroke-width="3.5"/>
<path d="M867.8 1029 L874.8 1029 L871.3 1036 Z" fill="#0f0"/>
<line x1="921.7" y1="1022.5" x2="921.7" y2="1033.5" stroke="#0f0" stroke-width="3.5"/>
<path d="M918.2 1029 L925.2 1029 L921.7 1036 Z" fill="#0f0"/>
<line x1="1022.5" y1="1022.5" x2="1022.5" y2="1033.5" stroke="#0f0" stroke-width="3.5"/>
<path d="M1019 1029 L1026 1029 L1022.5 1036 Z" fill="#0f0"/>
<line x1="1073" y1="1022.5" x2="1073" y2="1033.5" stroke="#0f0" stroke-width="3.5"/>
<path d="M1069.5 1029 L1076.5 1029 L1073 1036 Z" fill="#0f0"/>
<line x1="1123.4" y1="1022.5" x2="1123.4" y2="1033.5" stroke="#0f0" stroke-width="3.5"/>
<path d="M1119.9 1029 L1126.9 1029 L1123.4 1036 Z" fill="#0f0"/>
<line x1="1224.2" y1="1022.5" x2="1224.2" y2="1033.5" stroke="#0f0" stroke-width="3.5"/>
<path d="M1220.7 1029 L1227.7 1029 L1224.2 1036 Z" fill="#0f0"/>
<line x1="1274.6" y1="1022.5" x2="1274.6" y2="1033.5" stroke="#0f0" stroke-width="3.5"/>
<path d="M1271.1 1029 L1278.1 1029 L1274.6 1036 Z" fill="#0f0"/>
<line x1="1325" y1="1022.5" x2="1325" y2="1033.5" stroke="#0f0" stroke-width="3.5"/>
<path d="M1321.5 1029 L1328.5 1029 L1325 1036 Z" fill="#0f0"/>
<line x1="972.1" y1="1022.5" x2="972.1" y2="1033.5" stroke="#0f0" stroke-width="3.5"/>
<path d="M968.6 1029 L975.6 1029 L972.1 1036 Z" fill="#0f0"/>
<line x1="1173.8" y1="1022.5" x2="1173.8" y2="1033.5" stroke="#0f0" stroke-width="3.5"/>
<path d="M1170.3 1029 L1177.3 1029 L1173.8 1036 Z" fill="#0f0"/>
<line x1="820.9" y1="926.6" x2="820.9" y2="937.6" stroke="#0f0" stroke-width="3.5"/>
<path d="M817.4 933.1 L824.4 933.1 L820.9 940.1 Z" fill="#0f0"/>
<line x1="871.3" y1="926.6" x2="871.3" y2="937.6" stroke="#0f0" stroke-width="3.5"/>
<path d="M867.8 933.1 L874.8 933.1 L871.3 940.1 Z" fill="#0f0"/>
<line x1="921.7" y1="926.6" x2="921.7" y2="937.6" stroke="#0f0" stroke-width="3.5"/>
<path d="M918.2 933.1 L925.2 933.1 L921.7 940.1 Z" fill="#0f0"/>
<line x1="1022.5" y1="926.6" x2="1022.5" y2="937.6" stroke="#0f0" stroke-width="3.5"/>
<path d="M1019 933.1 L1026 933.1 L1022.5 940.1 Z" fill="#0f0"/>
<line x1="1073" y1="926.6" x2="1073" y2="937.6" stroke="#0f0" stroke-width="3.5"/>
<path d="M1069.5 933.1 L1076.5 933.1 L1073 940.1 Z" fill="#0f0"/>
<line x1="1123.4" y1="926.6" x2="1123.4" y2="937.6" stroke="#0f0" stroke-width="3.5"/>
<path d="M1119.9 933.1 L1126.9 933.1 L1123.4 940.1 Z" fill="#0f0"/>
<line x1="1224.2" y1="926.6" x2="1224.2" y2="937.6" stroke="#0f0" stroke-width="3.5"/>
<path d="M1220.7 933.1 L1227.7 933.1 L1224.2 940.1 Z" fill="#0f0"/>
<line x1="1274.6" y1="926.6" x2="1274.6" y2="937.6" stroke="#0f0" stroke-width="3.5"/>
<path d="M1271.1 933.1 L1278.1 933.1 L1274.6 940.1 Z" fill="#0f0"/>
<line x1="1325" y1="926.6" x2="1325" y2="937.6" stroke="#0f0" stroke-width="3.5"/>
<path d="M1321.5 933.1 L1328.5 933.1 L1325 940.1 Z" fill="#0f0"/>
<line x1="972.1" y1="926.6" x2="972.1" y2="937.6" stroke="#0f0" stroke-width="3.5"/>
<path d="M968.6 933.1 L975.6 933.1 L972.1 940.1 Z" fill="#0f0"/>
<line x1="1173.8" y1="926.6" x2="1173.8" y2="937.6" stroke="#0f0" stroke-width="3.5"/>
<path d="M1170.3 933.1 L1177.3 933.1 L1173.8 940.1 Z" fill="#0f0"/>
<line x1="820.9" y1="830.7" x2="820.9" y2="841.7" stroke="#0f0" stroke-width="3.5"/>
<path d="M817.4 837.2 L824.4 837.2 L820.9 844.2 Z" fill="#0f0"/>
<line x1="871.3" y1="830.7" x2="871.3" y2="841.7" stroke="#0f0" stroke-width="3.5"/>
<path d="M867.8 837.2 L874.8 837.2 L871.3 844.2 Z" fill="#0f0"/>
<line x1="921.7" y1="830.7" x2="921.7" y2="841.7" stroke="#0f0" stroke-width="3.5"/>
<path d="M918.2 837.2 L925.2 837.2 L921.7 844.2 Z" fill="#0f0"/>
<line x1="1022.5" y1="830.7" x2="1022.5" y2="841.7" stroke="#0f0" stroke-width="3.5"/>
<path d="M1019 837.2 L1026 837.2 L1022.5 844.2 Z" fill="#0f0"/>
<line x1="1073" y1="830.7" x2="1073" y2="841.7" stroke="#0f0" stroke-width="3.5"/>
<path d="M1069.5 837.2 L1076.5 837.2 L1073 844.2 Z" fill="#0f0"/>
<line x1="1123.4" y1="830.7" x2="1123.4" y2="841.7" stroke="#0f0" stroke-width="3.5"/>
<path d="M1119.9 837.2 L1126.9 837.2 L1123.4 844.2 Z" fill="#0f0"/>
<line x1="1224.2" y1="830.7" x2="1224.2" y2="841.7" stroke="#0f0" stroke-width="3.5"/>
<path d="M1220.7 837.2 L1227.7 837.2 L1224.2 844.2 Z" fill="#0f0"/>
<line x1="1274.6" y1="830.7" x2="1274.6" y2="841.7" stroke="#0f0" stroke-width="3.5"/>
<path d="M1271.1 837.2 L1278.1 837.2 L1274.6 844.2 Z" fill="#0f0"/>
<line x1="1325" y1="830.7" x2="1325" y2="841.7" stroke="#0f0" stroke-width="3.5"/>
<path d="M1321.5 837.2 L1328.5 837.2 L1325 844.2 Z" fill="#0f0"/>
<line x1="972.1" y1="830.7" x2="972.1" y2="841.7" stroke="#0f0" stroke-width="3.5"/>
<path d="M968.6 837.2 L975.6 837.2 L972.1 844.2 Z" fill="#0f0"/>
<line x1="1173.8" y1="830.7" x2="1173.8" y2="841.7" stroke="#0f0" stroke-width="3.5"/>
<path d="M1170.3 837.2 L1177.3 837.2 L1173.8 844.2 Z" fill="#0f0"/>
<line x1="820.9" y1="734.8" x2="820.9" y2="745.8" stroke="#0f0" stroke-width="3.5"/>
<path d="M817.4 741.3 L824.4 741.3 L820.9 748.3 Z" fill="#0f0"/>
<line x1="871.3" y1="734.8" x2="871.3" y2="745.8" stroke="#0f0" stroke-width="3.5"/>
<path d="M867.8 741.3 L874.8 741.3 L871.3 748.3 Z" fill="#0f0"/>
<line x1="921.7" y1="734.8" x2="921.7" y2="745.8" stroke="#0f0" stroke-width="3.5"/>
<path d="M918.2 741.3 L925.2 741.3 L921.7 748.3 Z" fill="#0f0"/>
<line x1="1022.5" y1="734.8" x2="1022.5" y2="745.8" stroke="#0f0" stroke-width="3.5"/>
<path d="M1019 741.3 L1026 741.3 L1022.5 748.3 Z" fill="#0f0"/>
<line x1="1073" y1="734.8" x2="1073" y2="745.8" stroke="#0f0" stroke-width="3.5"/>
<path d="M1069.5 741.3 L1076.5 741.3 L1073 748.3 Z" fill="#0f0"/>
<line x1="1123.4" y1="734.8" x2="1123.4" y2="745.8" stroke="#0f0" stroke-width="3.5"/>
<path d="M1119.9 741.3 L1126.9 741.3 L1123.4 748.3 Z" fill="#0f0"/>
<line x1="1224.2" y1="734.8" x2="1224.2" y2="745.8" stroke="#0f0" stroke-width="3.5"/>
<path d="M1220.7 741.3 L1227.7 741.3 L1224.2 748.3 Z" fill="#0f0"/>
<line x1="1274.6" y1="734.8" x2="1274.6" y2="745.8" stroke="#0f0" stroke-width="3.5"/>
<path d="M1271.1 741.3 L1278.1 741.3 L1274.6 748.3 Z" fill="#0f0"/>
<line x1="1325" y1="734.8" x2="1325" y2="745.8" stroke="#0f0" stroke-width="3.5"/>
<path d="M1321.5 741.3 L1328.5 741.3 L1325 748.3 Z" fill="#0f0"/>
<line x1="972.1" y1="734.8" x2="972.1" y2="745.8" stroke="#0f0" stroke-width="3.5"/>
<path d="M968.6 741.3 L975.6 741.3 L972.1 748.3 Z" fill="#0f0"/>
<line x1="1173.8" y1="734.8" x2="1173.8" y2="745.8" stroke="#0f0" stroke-width="3.5"/>
<path d="M1170.3 741.3 L1177.3 741.3 L1173.8 748.3 Z" fill="#0f0"/>
<line x1="820.9" y1="638.9" x2="820.9" y2="649.9" stroke="#0f0" stroke-width="3.5"/>
<path d="M817.4 645.4 L824.4 645.4 L820.9 652.4 Z" fill="#0f0"/>
<line x1="871.3" y1="638.9" x2="871.3" y2="649.9" stroke="#0f0" stroke-width="3.5"/>
<path d="M867.8 645.4 L874.8 645.4 L871.3 652.4 Z" fill="#0f0"/>
<line x1="921.7" y1="638.9" x2="921.7" y2="649.9" stroke="#0f0" stroke-width="3.5"/>
<path d="M918.2 645.4 L925.2 645.4 L921.7 652.4 Z" fill="#0f0"/>
<line x1="1022.5" y1="638.9" x2="1022.5" y2="649.9" stroke="#0f0" stroke-width="3.5"/>
<path d="M1019 645.4 L1026 645.4 L1022.5 652.4 Z" fill="#0f0"/>
<line x1="1073" y1="638.9" x2="1073" y2="649.9" stroke="#0f0" stroke-width="3.5"/>
<path d="M1069.5 645.4 L1076.5 645.4 L1073 652.4 Z" fill="#0f0"/>
<line x1="1123.4" y1="638.9" x2="1123.4" y2="649.9" stroke="#0f0" stroke-width="3.5"/>
<path d="M1119.9 645.4 L1126.9 645.4 L1123.4 652.4 Z" fill="#0f0"/>
<line x1="1224.2" y1="638.9" x2="1224.2" y2="649.9" stroke="#0f0" stroke-width="3.5"/>
<path d="M1220.7 645.4 L1227.7 645.4 L1224.2 652.4 Z" fill="#0f0"/>
<line x1="1274.6" y1="638.9" x2="1274.6" y2="649.9" stroke="#0f0" stroke-width="3.5"/>
<path d="M1271.1 645.4 L1278.1 645.4 L1274.6 652.4 Z" fill="#0f0"/>
<line x1="1325" y1="638.9" x2="1325" y2="649.9" stroke="#0f0" stroke-width="3.5"/>
<path d="M1321.5 645.4 L1328.5 645.4 L1325 652.4 Z" fill="#0f0"/>
<line x1="972.1" y1="638.9" x2="972.1" y2="649.9" stroke="#0f0" stroke-width="3.5"/>
<path d="M968.6 645.4 L975.6 645.4 L972.1 652.4 Z" fill="#0f0"/>
<line x1="1173.8" y1="638.9" x2="1173.8" y2="649.9" stroke="#0f0" stroke-width="3.5"/>
<path d="M1170.3 645.4 L1177.3 645.4 L1173.8 652.4 Z" fill="#0f0"/>
<line x1="820.9" y1="543" x2="820.9" y2="554" stroke="#0f0" stroke-width="3.5"/>
<path d="M817.4 549.5 L824.4 549.5 L820.9 556.5 Z" fill="#0f0"/>
<line x1="871.3" y1="543" x2="871.3" y2="554" stroke="#0f0" stroke-width="3.5"/>
<path d="M867.8 549.5 L874.8 549.5 L871.3 556.5 Z" fill="#0f0"/>
<line x1="921.7" y1="543" x2="921.7" y2="554" stroke="#0f0" stroke-width="3.5"/>
<path d="M918.2 549.5 L925.2 549.5 L921.7 556.5 Z" fill="#0f0"/>
<line x1="1022.5" y1="543" x2="1022.5" y2="554" stroke="#0f0" stroke-width="3.5"/>
<path d="M1019 549.5 L1026 549.5 L1022.5 556.5 Z" fill="#0f0"/>
<line x1="1073" y1="543" x2="1073" y2="554" stroke="#0f0" stroke-width="3.5"/>
<path d="M1069.5 549.5 L1076.5 549.5 L1073 556.5 Z" fill="#0f0"/>
<line x1="1123.4" y1="543" x2="1123.4" y2="554" stroke="#0f0" stroke-width="3.5"/>
<path d="M1119.9 549.5 L1126.9 549.5 L1123.4 556.5 Z" fill="#0f0"/>
<line x1="1224.2" y1="543" x2="1224.2" y2="554" stroke="#0f0" stroke-width="3.5"/>
<path d="M1220.7 549.5 L1227.7 549.5 L1224.2 556.5 Z" fill="#0f0"/>
<line x1="1274.6" y1="543" x2="1274.6" y2="554" stroke="#0f0" stroke-width="3.5"/>
<path d="M1271.1 549.5 L1278.1 549.5 L1274.6 556.5 Z" fill="#0f0"/>
<line x1="1325" y1="543" x2="1325" y2="554" stroke="#0f0" stroke-width="3.5"/>
<path d="M1321.5 549.5 L1328.5 549.5 L1325 556.5 Z" fill="#0f0"/>
<line x1="972.1" y1="543" x2="972.1" y2="554" stroke="#0f0" stroke-width="3.5"/>
<path d="M968.6 549.5 L975.6 549.5 L972.1 556.5 Z" fill="#0f0"/>
<line x1="1173.8" y1="543" x2="1173.8" y2="554" stroke="#0f0" stroke-width="3.5"/>
<path d="M1170.3 549.5 L1177.3 549.5 L1173.8 556.5 Z" fill="#0f0"/>
<line x1="820.9" y1="447.1" x2="820.9" y2="458.1" stroke="#0f0" stroke-width="3.5"/>
<path d="M817.4 453.6 L824.4 453.6 L820.9 460.6 Z" fill="#0f0"/>
<line x1="871.3" y1="447.1" x2="871.3" y2="458.1" stroke="#0f0" stroke-width="3.5"/>
<path d="M867.8 453.6 L874.8 453.6 L871.3 460.6 Z" fill="#0f0"/>
<line x1="921.7" y1="447.1" x2="921.7" y2="458.1" stroke="#0f0" stroke-width="3.5"/>
<path d="M918.2 453.6 L925.2 453.6 L921.7 460.6 Z" fill="#0f0"/>
<line x1="1022.5" y1="447.1" x2="1022.5" y2="458.1" stroke="#0f0" stroke-width="3.5"/>
<path d="M1019 453.6 L1026 453.6 L1022.5 460.6 Z" fill="#0f0"/>
<line x1="1073" y1="447.1" x2="1073" y2="458.1" stroke="#0f0" stroke-width="3.5"/>
<path d="M1069.5 453.6 L1076.5 453.6 L1073 460.6 Z" fill="#0f0"/>
<line x1="1123.4" y1="447.1" x2="1123.4" y2="458.1" stroke="#0f0" stroke-width="3.5"/>
<path d="M1119.9 453.6 L1126.9 453.6 L1123.4 460.6 Z" fill="#0f0"/>
<line x1="1224.2" y1="447.1" x2="1224.2" y2="458.1" stroke="#0f0" stroke-width="3.5"/>
<path d="M1220.7 453.6 L1227.7 453.6 L1224.2 460.6 Z" fill="#0f0"/>
<line x1="1274.6" y1="447.1" x2="1274.6" y2="458.1" stroke="#0f0" stroke-width="3.5"/>
<path d="M1271.1 453.6 L1278.1 453.6 L1274.6 460.6 Z" fill="#0f0"/>
<line x1="1325" y1="447.1" x2="1325" y2="458.1" stroke="#0f0" stroke-width="3.5"/>
<path d="M1321.5 453.6 L1328.5 453.6 L1325 460.6 Z" fill="#0f0"/>
<line x1="972.1" y1="447.1" x2="972.1" y2="458.1" stroke="#0f0" stroke-width="3.5"/>
<path d="M968.6 453.6 L975.6 453.6 L972.1 460.6 Z" fill="#0f0"/>
<line x1="1173.8" y1="447.1" x2="1173.8" y2="458.1" stroke="#0f0" stroke-width="3.5"/>
<path d="M1170.3 453.6 L1177.3 453.6 L1173.8 460.6 Z" fill="#0f0"/>
<line x1="820.9" y1="351.2" x2="820.9" y2="362.2" stroke="#0f0" stroke-width="3.5"/>
<path d="M817.4 357.7 L824.4 357.7 L820.9 364.7 Z" fill="#0f0"/>
<line x1="871.3" y1="351.2" x2="871.3" y2="362.2" stroke="#0f0" stroke-width="3.5"/>
<path d="M867.8 357.7 L874.8 357.7 L871.3 364.7 Z" fill="#0f0"/>
<line x1="921.7" y1="351.2" x2="921.7" y2="362.2" stroke="#0f0" stroke-width="3.5"/>
<path d="M918.2 357.7 L925.2 357.7 L921.7 364.7 Z" fill="#0f0"/>
<line x1="1022.5" y1="351.2" x2="1022.5" y2="362.2" stroke="#0f0" stroke-width="3.5"/>
<path d="M1019 357.7 L1026 357.7 L1022.5 364.7 Z" fill="#0f0"/>
<line x1="1073" y1="351.2" x2="1073" y2="362.2" stroke="#0f0" stroke-width="3.5"/>
<path d="M1069.5 357.7 L1076.5 357.7 L1073 364.7 Z" fill="#0f0"/>
<line x1="1123.4" y1="351.2" x2="1123.4" y2="362.2" stroke="#0f0" stroke-width="3.5"/>
<path d="M1119.9 357.7 L1126.9 357.7 L1123.4 364.7 Z" fill="#0f0"/>
<line x1="1224.2" y1="351.2" x2="1224.2" y2="362.2" stroke="#0f0" stroke-width="3.5"/>
<path d="M1220.7 357.7 L1227.7 357.7 L1224.2 364.7 Z" fill="#0f0"/>
<line x1="1274.6" y1="351.2" x2="1274.6" y2="362.2" stroke="#0f0" stroke-width="3.5"/>
<path d="M1271.1 357.7 L1278.1 357.7 L1274.6 364.7 Z" fill="#0f0"/>
<line x1="1325" y1="351.2" x2="1325" y2="362.2" stroke="#0f0" stroke-width="3.5"/>
<path d="M1321.5 357.7 L1328.5 357.7 L1325 364.7 Z" fill="#0f0"/>
<line x1="972.1" y1="351.2" x2="972.1" y2="362.2" stroke="#0f0" stroke-width="3.5"/>
<path d="M968.6 357.7 L975.6 357.7 L972.1 364.7 Z" fill="#0f0"/>
<line x1="1173.8" y1="351.2" x2="1173.8" y2="362.2" stroke="#0f0" stroke-width="3.5"/>
<path d="M1170.3 357.7 L1177.3 357.7 L1173.8 364.7 Z" fill="#0f0"/>
<line x1="820.9" y1="255.3" x2="820.9" y2="266.3" stroke="#0f0" stroke-width="3.5"/>
<path d="M817.4 261.8 L824.4 261.8 L820.9 268.8 Z" fill="#0f0"/>
<line x1="871.3" y1="255.3" x2="871.3" y2="266.3" stroke="#0f0" stroke-width="3.5"/>
<path d="M867.8 261.8 L874.8 261.8 L871.3 268.8 Z" fill="#0f0"/>
<line x1="921.7" y1="255.3" x2="921.7" y2="266.3" stroke="#0f0" stroke-width="3.5"/>
<path d="M918.2 261.8 L925.2 261.8 L921.7 268.8 Z" fill="#0f0"/>
<line x1="1022.5" y1="255.3" x2="1022.5" y2="266.3" stroke="#0f0" stroke-width="3.5"/>
<path d="M1019 261.8 L1026 261.8 L1022.5 268.8 Z" fill="#0f0"/>
<line x1="1073" y1="255.3" x2="1073" y2="266.3" stroke="#0f0" stroke-width="3.5"/>
<path d="M1069.5 261.8 L1076.5 261.8 L1073 268.8 Z" fill="#0f0"/>
<line x1="1123.4" y1="255.3" x2="1123.4" y2="266.3" stroke="#0f0" stroke-width="3.5"/>
<path d="M1119.9 261.8 L1126.9 261.8 L1123.4 268.8 Z" fill="#0f0"/>
<line x1="1224.2" y1="255.3" x2="1224.2" y2="266.3" stroke="#0f0" stroke-width="3.5"/>
<path d="M1220.7 261.8 L1227.7 261.8 L1224.2 268.8 Z" fill="#0f0"/>
<line x1="1274.6" y1="255.3" x2="1274.6" y2="266.3" stroke="#0f0" stroke-width="3.5"/>
<path d="M1271.1 261.8 L1278.1 261.8 L1274.6 268.8 Z" fill="#0f0"/>
<line x1="1325" y1="255.3" x2="1325" y2="266.3" stroke="#0f0" stroke-width="3.5"/>
<path d="M1321.5 261.8 L1328.5 261.8 L1325 268.8 Z" fill="#0f0"/>
<line x1="972.1" y1="255.3" x2="972.1" y2="266.3" stroke="#0f0" stroke-width="3.5"/>
<path d="M968.6 261.8 L975.6 261.8 L972.1 268.8 Z" fill="#0f0"/>
<line x1="1173.8" y1="255.3" x2="1173.8" y2="266.3" stroke="#0f0" stroke-width="3.5"/>
<path d="M1170.3 261.8 L1177.3 261.8 L1173.8 268.8 Z" fill="#0f0"/>
<path d="M571.2 1138.5 L772.8 1133.4" fill="none" stroke="#0000ff" stroke-width="5" stroke-linecap="butt"/>
<path d="M772.8 1133.4 Q873.6 1136.9 974.4 1133.4" fill="none" stroke="#0000ff" stroke-width="5" stroke-linecap="butt"/>
<path d="M974.4 1133.4 Q1075.2 1136.9 1176.1 1133.4" fill="none" stroke="#0000ff" stroke-width="5" stroke-linecap="butt"/>
<path d="M1176.1 1133.4 Q1276.9 1136.9 1377.7 1133.4" fill="none" stroke="#0000ff" stroke-width="5" stroke-linecap="butt"/>
<path d="M1377.7 1133.4 L1579.3 1138.5" fill="none" stroke="#0000ff" stroke-width="5" stroke-linecap="butt"/>
<path d="M577.6 1048.1 L779.2 1038.5" fill="none" stroke="#0000ff" stroke-width="5" stroke-linecap="butt"/>
<path d="M779.2 1038.5 Q880 1042 980.8 1038.5" fill="none" stroke="#0000ff" stroke-width="5" stroke-linecap="butt"/>
<path d="M980.8 1038.5 Q1081.7 1042 1182.5 1038.5" fill="none" stroke="#0000ff" stroke-width="5" stroke-linecap="butt"/>
<path d="M1182.5 1038.5 Q1283.3 1042 1384.1 1038.5" fill="none" stroke="#0000ff" stroke-width="5" stroke-linecap="butt"/>
<path d="M1384.1 1038.5 L1585.7 1048.1" fill="none" stroke="#0000ff" stroke-width="5" stroke-linecap="butt"/>
<path d="M571.4 956.6 L773 942.1" fill="none" stroke="#0000ff" stroke-width="5" stroke-linecap="butt"/>
<path d="M773 942.1 Q873.8 945.6 974.6 942.1" fill="none" stroke="#0000ff" stroke-width="5" stroke-linecap="butt"/>
<path d="M974.6 942.1 Q1075.5 945.6 1176.3 942.1" fill="none" stroke="#0000ff" stroke-width="5" stroke-linecap="butt"/>
<path d="M1176.3 942.1 Q1277.1 945.6 1377.9 942.1" fill="none" stroke="#0000ff" stroke-width="5" stroke-linecap="butt"/>
<path d="M1377.9 942.1 L1579.5 956.6" fill="none" stroke="#0000ff" stroke-width="5" stroke-linecap="butt"/>
<path d="M573.7 865.1 L775.3 846.3" fill="none" stroke="#0000ff" stroke-width="5" stroke-linecap="butt"/>
<path d="M775.3 846.3 Q876.1 849.8 976.9 846.3" fill="none" stroke="#0000ff" stroke-width="5" stroke-linecap="butt"/>
<path d="M976.9 846.3 Q1077.8 849.8 1178.6 846.3" fill="none" stroke="#0000ff" stroke-width="5" stroke-linecap="butt"/>
<path d="M1178.6 846.3 Q1279.4 849.8 1380.2 846.3" fill="none" stroke="#0000ff" stroke-width="5" stroke-linecap="butt"/>
<path d="M1380.2 846.3 L1581.8 865.1" fill="none" stroke="#0000ff" stroke-width="5" stroke-linecap="butt"/>
<path d="M580.4 773.2 L782 751.5" fill="none" stroke="#0000ff" stroke-width="5" stroke-linecap="butt"/>
<path d="M782 751.5 Q882.8 755 983.6 751.5" fill="none" stroke="#0000ff" stroke-width="5" stroke-linecap="butt"/>
<path d="M983.6 751.5 Q1084.5 755 1185.3 751.5" fill="none" stroke="#0000ff" stroke-width="5" stroke-linecap="butt"/>
<path d="M1185.3 751.5 Q1286.1 755 1386.9 751.5" fill="none" stroke="#0000ff" stroke-width="5" stroke-linecap="butt"/>
<path d="M1386.9 751.5 L1588.5 773.2" fill="none" stroke="#0000ff" stroke-width="5" stroke-linecap="butt"/>
<path d="M586.8 679.6 L788.4 656" fill="none" stroke="#0000ff" stroke-width="5" stroke-linecap="butt"/>
<path d="M788.4 656 Q889.2 659.5 990 656" fill="none" stroke="#0000ff" stroke-width="5" stroke-linecap="butt"/>
<path d="M990 656 Q1090.8 659.5 1191.7 656" fill="none" stroke="#0000ff" stroke-width="5" stroke-linecap="butt"/>
<path d="M1191.7 656 Q1292.5 659.5 1393.3 656" fill="none" stroke="#0000ff" stroke-width="5" stroke-linecap="butt"/>
<path d="M1393.3 656 L1594.9 679.6" fill="none" stroke="#0000ff" stroke-width="5" stroke-linecap="butt"/>
<path d="M592.7 586.3 L794.3 560.1" fill="none" stroke="#0000ff" stroke-width="5" stroke-linecap="butt"/>
<path d="M794.3 560.1 Q895.1 563.6 995.9 560.1" fill="none" stroke="#0000ff" stroke-width="5" stroke-linecap="butt"/>
<path d="M995.9 560.1 Q1096.8 563.6 1197.6 560.1" fill="none" stroke="#0000ff" stroke-width="5" stroke-linecap="butt"/>
<path d="M1197.6 560.1 Q1298.4 563.6 1399.2 560.1" fill="none" stroke="#0000ff" stroke-width="5" stroke-linecap="butt"/>
<path d="M1399.2 560.1 L1600.8 586.3" fill="none" stroke="#0000ff" stroke-width="5" stroke-linecap="butt"/>
<path d="M597.2 492.5 L798.8 464.5" fill="none" stroke="#0000ff" stroke-width="5" stroke-linecap="butt"/>
<path d="M798.8 464.5 Q899.6 468 1000.4 464.5" fill="none" stroke="#0000ff" stroke-width="5" stroke-linecap="butt"/>
<path d="M1000.4 464.5 Q1101.2 468 1202.1 464.5" fill="none" stroke="#0000ff" stroke-width="5" stroke-linecap="butt"/>
<path d="M1202.1 464.5 Q1302.9 468 1403.7 464.5" fill="none" stroke="#0000ff" stroke-width="5" stroke-linecap="butt"/>
<path d="M1403.7 464.5 L1605.3 492.5" fill="none" stroke="#0000ff" stroke-width="5" stroke-linecap="butt"/>
<path d="M600.4 397.9 L802 369.1" fill="none" stroke="#0000ff" stroke-width="5" stroke-linecap="butt"/>
<path d="M802 369.1 Q902.8 372.6 1003.6 369.1" fill="none" stroke="#0000ff" stroke-width="5" stroke-linecap="butt"/>
<path d="M1003.6 369.1 Q1104.5 372.6 1205.3 369.1" fill="none" stroke="#0000ff" stroke-width="5" stroke-linecap="butt"/>
<path d="M1205.3 369.1 Q1306.1 372.6 1406.9 369.1" fill="none" stroke="#0000ff" stroke-width="5" stroke-linecap="butt"/>
<path d="M1406.9 369.1 L1608.5 397.9" fill="none" stroke="#0000ff" stroke-width="5" stroke-linecap="butt"/>
<path d="M601.4 303.3 L803 273.8" fill="none" stroke="#0000ff" stroke-width="5" stroke-linecap="butt"/>
<path d="M803 273.8 Q903.8 277.3 1004.6 273.8" fill="none" stroke="#0000ff" stroke-width="5" stroke-linecap="butt"/>
<path d="M1004.6 273.8 Q1105.5 277.3 1206.3 273.8" fill="none" stroke="#0000ff" stroke-width="5" stroke-linecap="butt"/>
<path d="M1206.3 273.8 Q1307.1 277.3 1407.9 273.8" fill="none" stroke="#0000ff" stroke-width="5" stroke-linecap="butt"/>
<path d="M1407.9 273.8 L1609.5 303.3" fill="none" stroke="#0000ff" stroke-width="5" stroke-linecap="butt"/>
<polyline points="568.9,1228.3 571.2,1138.5 577.6,1048.1 571.4,956.6 573.7,865.1 580.4,773.2 586.8,679.6 592.7,586.3 597.2,492.5 600.4,397.9 601.4,303.3" fill="none" stroke="#0000ff" stroke-width="5" stroke-linejoin="miter"/>
<polyline points="770.5,1228.3 772.8,1133.4 779.2,1038.5 773,942.1 775.3,846.3 782,751.5 788.4,656 794.3,560.1 798.8,464.5 802,369.1 803,273.8" fill="none" stroke="#0000ff" stroke-width="5" stroke-linejoin="miter"/>
<polyline points="972.1,1228.3 974.4,1133.4 980.8,1038.5 974.6,942.1 976.9,846.3 983.6,751.5 990,656 995.9,560.1 1000.4,464.5 1003.6,369.1 1004.6,273.8" fill="none" stroke="#0000ff" stroke-width="5" stroke-linejoin="miter"/>
<polyline points="1173.8,1228.3 1176.1,1133.4 1182.5,1038.5 1176.3,942.1 1178.6,846.3 1185.3,751.5 1191.7,656 1197.6,560.1 1202.1,464.5 1205.3,369.1 1206.3,273.8" fill="none" stroke="#0000ff" stroke-width="5" stroke-linejoin="miter"/>
<polyline points="1375.4,1228.3 1377.7,1133.4 1384.1,1038.5 1377.9,942.1 1380.2,846.3 1386.9,751.5 1393.3,656 1399.2,560.1 1403.7,464.5 1406.9,369.1 1407.9,273.8" fill="none" stroke="#0000ff" stroke-width="5" stroke-linejoin="miter"/>
<polyline points="1577,1228.3 1579.3,1138.5 1585.7,1048.1 1579.5,956.6 1581.8,865.1 1588.5,773.2 1594.9,679.6 1600.8,586.3 1605.3,492.5 1608.5,397.9 1609.5,303.3" fill="none" stroke="#0000ff" stroke-width="5" stroke-linejoin="miter"/>
<line x1="567.6" y1="1227" x2="570.2" y2="1229.6" stroke="#fff" stroke-width="1.5"/>
<line x1="569.9" y1="1137.2" x2="572.5" y2="1139.8" stroke="#fff" stroke-width="1.5"/>
<line x1="576.3" y1="1046.8" x2="578.9" y2="1049.4" stroke="#fff" stroke-width="1.5"/>
<line x1="570.1" y1="955.3" x2="572.7" y2="957.9" stroke="#fff" stroke-width="1.5"/>
<line x1="572.4" y1="863.8" x2="575" y2="866.4" stroke="#fff" stroke-width="1.5"/>
<line x1="579.1" y1="771.9" x2="581.7" y2="774.5" stroke="#fff" stroke-width="1.5"/>
<line x1="585.5" y1="678.3" x2="588.1" y2="680.9" stroke="#fff" stroke-width="1.5"/>
<line x1="591.4" y1="585" x2="594" y2="587.6" stroke="#fff" stroke-width="1.5"/>
<line x1="595.9" y1="491.2" x2="598.5" y2="493.8" stroke="#fff" stroke-width="1.5"/>
<line x1="599.1" y1="396.6" x2="601.7" y2="399.2" stroke="#fff" stroke-width="1.5"/>
<line x1="600.1" y1="302" x2="602.7" y2="304.6" stroke="#fff" stroke-width="1.5"/>
<line x1="769.2" y1="1227" x2="771.8" y2="1229.6" stroke="#fff" stroke-width="1.5"/>
<line x1="769.8" y1="1203.3" x2="772.4" y2="1205.9" stroke="#fff" stroke-width="1.5"/>
<line x1="770.4" y1="1179.5" x2="773" y2="1182.1" stroke="#fff" stroke-width="1.5"/>
<line x1="770.9" y1="1155.8" x2="773.5" y2="1158.4" stroke="#fff" stroke-width="1.5"/>
<line x1="771.5" y1="1132.1" x2="774.1" y2="1134.7" stroke="#fff" stroke-width="1.5"/>
<line x1="773.1" y1="1108.4" x2="775.7" y2="1111" stroke="#fff" stroke-width="1.5"/>
<line x1="774.7" y1="1084.6" x2="777.3" y2="1087.2" stroke="#fff" stroke-width="1.5"/>
<line x1="776.3" y1="1060.9" x2="778.9" y2="1063.5" stroke="#fff" stroke-width="1.5"/>
<line x1="777.9" y1="1037.2" x2="780.5" y2="1039.8" stroke="#fff" stroke-width="1.5"/>
<line x1="776.4" y1="1013.1" x2="779" y2="1015.7" stroke="#fff" stroke-width="1.5"/>
<line x1="774.8" y1="989" x2="777.4" y2="991.6" stroke="#fff" stroke-width="1.5"/>
<line x1="773.3" y1="964.9" x2="775.9" y2="967.5" stroke="#fff" stroke-width="1.5"/>
<line x1="771.7" y1="940.8" x2="774.3" y2="943.4" stroke="#fff" stroke-width="1.5"/>
<line x1="772.3" y1="916.8" x2="774.9" y2="919.4" stroke="#fff" stroke-width="1.5"/>
<line x1="772.9" y1="892.9" x2="775.5" y2="895.5" stroke="#fff" stroke-width="1.5"/>
<line x1="773.4" y1="869" x2="776" y2="871.5" stroke="#fff" stroke-width="1.5"/>
<line x1="774" y1="845" x2="776.6" y2="847.6" stroke="#fff" stroke-width="1.5"/>
<line x1="775.7" y1="821.3" x2="778.3" y2="823.9" stroke="#fff" stroke-width="1.5"/>
<line x1="777.4" y1="797.6" x2="780" y2="800.2" stroke="#fff" stroke-width="1.5"/>
<line x1="779" y1="773.9" x2="781.6" y2="776.5" stroke="#fff" stroke-width="1.5"/>
<line x1="780.7" y1="750.2" x2="783.3" y2="752.8" stroke="#fff" stroke-width="1.5"/>
<line x1="782.3" y1="726.3" x2="784.9" y2="728.9" stroke="#fff" stroke-width="1.5"/>
<line x1="783.9" y1="702.5" x2="786.5" y2="705" stroke="#fff" stroke-width="1.5"/>
<line x1="785.5" y1="678.6" x2="788.1" y2="681.2" stroke="#fff" stroke-width="1.5"/>
<line x1="787.1" y1="654.7" x2="789.7" y2="657.3" stroke="#fff" stroke-width="1.5"/>
<line x1="788.6" y1="630.7" x2="791.2" y2="633.3" stroke="#fff" stroke-width="1.5"/>
<line x1="790.1" y1="606.8" x2="792.7" y2="609.3" stroke="#fff" stroke-width="1.5"/>
<line x1="791.5" y1="582.8" x2="794.1" y2="585.4" stroke="#fff" stroke-width="1.5"/>
<line x1="793" y1="558.8" x2="795.6" y2="561.4" stroke="#fff" stroke-width="1.5"/>
<line x1="794.1" y1="534.9" x2="796.7" y2="537.5" stroke="#fff" stroke-width="1.5"/>
<line x1="795.3" y1="511" x2="797.9" y2="513.6" stroke="#fff" stroke-width="1.5"/>
<line x1="796.4" y1="487.1" x2="799" y2="489.7" stroke="#fff" stroke-width="1.5"/>
<line x1="797.5" y1="463.2" x2="800.1" y2="465.8" stroke="#fff" stroke-width="1.5"/>
<line x1="798.3" y1="439.3" x2="800.9" y2="441.9" stroke="#fff" stroke-width="1.5"/>
<line x1="799.1" y1="415.5" x2="801.7" y2="418.1" stroke="#fff" stroke-width="1.5"/>
<line x1="799.9" y1="391.6" x2="802.5" y2="394.2" stroke="#fff" stroke-width="1.5"/>
<line x1="800.7" y1="367.8" x2="803.3" y2="370.4" stroke="#fff" stroke-width="1.5"/>
<line x1="801" y1="344" x2="803.6" y2="346.6" stroke="#fff" stroke-width="1.5"/>
<line x1="801.2" y1="320.1" x2="803.8" y2="322.7" stroke="#fff" stroke-width="1.5"/>
<line x1="801.5" y1="296.3" x2="804.1" y2="298.9" stroke="#fff" stroke-width="1.5"/>
<line x1="801.7" y1="272.5" x2="804.3" y2="275.1" stroke="#fff" stroke-width="1.5"/>
<line x1="970.8" y1="1227" x2="973.4" y2="1229.6" stroke="#fff" stroke-width="1.5"/>
<line x1="971.4" y1="1203.3" x2="974" y2="1205.9" stroke="#fff" stroke-width="1.5"/>
<line x1="972" y1="1179.5" x2="974.6" y2="1182.1" stroke="#fff" stroke-width="1.5"/>
<line x1="972.6" y1="1155.8" x2="975.2" y2="1158.4" stroke="#fff" stroke-width="1.5"/>
<line x1="973.1" y1="1132.1" x2="975.7" y2="1134.7" stroke="#fff" stroke-width="1.5"/>
<line x1="974.7" y1="1108.4" x2="977.3" y2="1111" stroke="#fff" stroke-width="1.5"/>
<line x1="976.3" y1="1084.6" x2="978.9" y2="1087.2" stroke="#fff" stroke-width="1.5"/>
<line x1="977.9" y1="1060.9" x2="980.5" y2="1063.5" stroke="#fff" stroke-width="1.5"/>
<line x1="979.5" y1="1037.2" x2="982.1" y2="1039.8" stroke="#fff" stroke-width="1.5"/>
<line x1="978" y1="1013.1" x2="980.6" y2="1015.7" stroke="#fff" stroke-width="1.5"/>
<line x1="976.4" y1="989" x2="979" y2="991.6" stroke="#fff" stroke-width="1.5"/>
<line x1="974.9" y1="964.9" x2="977.5" y2="967.5" stroke="#fff" stroke-width="1.5"/>
<line x1="973.3" y1="940.8" x2="975.9" y2="943.4" stroke="#fff" stroke-width="1.5"/>
<line x1="973.9" y1="916.8" x2="976.5" y2="919.4" stroke="#fff" stroke-width="1.5"/>
<line x1="974.5" y1="892.9" x2="977.1" y2="895.5" stroke="#fff" stroke-width="1.5"/>
<line x1="975.1" y1="869" x2="977.7" y2="871.5" stroke="#fff" stroke-width="1.5"/>
<line x1="975.6" y1="845" x2="978.2" y2="847.6" stroke="#fff" stroke-width="1.5"/>
<line x1="977.3" y1="821.3" x2="979.9" y2="823.9" stroke="#fff" stroke-width="1.5"/>
<line x1="979" y1="797.6" x2="981.6" y2="800.2" stroke="#fff" stroke-width="1.5"/>
<line x1="980.7" y1="773.9" x2="983.3" y2="776.5" stroke="#fff" stroke-width="1.5"/>
<line x1="982.3" y1="750.2" x2="984.9" y2="752.8" stroke="#fff" stroke-width="1.5"/>
<line x1="983.9" y1="726.3" x2="986.5" y2="728.9" stroke="#fff" stroke-width="1.5"/>
<line x1="985.5" y1="702.5" x2="988.1" y2="705" stroke="#fff" stroke-width="1.5"/>
<line x1="987.1" y1="678.6" x2="989.7" y2="681.2" stroke="#fff" stroke-width="1.5"/>
<line x1="988.7" y1="654.7" x2="991.3" y2="657.3" stroke="#fff" stroke-width="1.5"/>
<line x1="990.2" y1="630.7" x2="992.8" y2="633.3" stroke="#fff" stroke-width="1.5"/>
<line x1="991.7" y1="606.8" x2="994.3" y2="609.3" stroke="#fff" stroke-width="1.5"/>
<line x1="993.2" y1="582.8" x2="995.8" y2="585.4" stroke="#fff" stroke-width="1.5"/>
<line x1="994.6" y1="558.8" x2="997.2" y2="561.4" stroke="#fff" stroke-width="1.5"/>
<line x1="995.8" y1="534.9" x2="998.4" y2="537.5" stroke="#fff" stroke-width="1.5"/>
<line x1="996.9" y1="511" x2="999.5" y2="513.6" stroke="#fff" stroke-width="1.5"/>
<line x1="998" y1="487.1" x2="1000.6" y2="489.7" stroke="#fff" stroke-width="1.5"/>
<line x1="999.1" y1="463.2" x2="1001.7" y2="465.8" stroke="#fff" stroke-width="1.5"/>
<line x1="999.9" y1="439.3" x2="1002.5" y2="441.9" stroke="#fff" stroke-width="1.5"/>
<line x1="1000.7" y1="415.5" x2="1003.3" y2="418.1" stroke="#fff" stroke-width="1.5"/>
<line x1="1001.5" y1="391.6" x2="1004.1" y2="394.2" stroke="#fff" stroke-width="1.5"/>
<line x1="1002.3" y1="367.8" x2="1004.9" y2="370.4" stroke="#fff" stroke-width="1.5"/>
<line x1="1002.6" y1="344" x2="1005.2" y2="346.6" stroke="#fff" stroke-width="1.5"/>
<line x1="1002.8" y1="320.1" x2="1005.4" y2="322.7" stroke="#fff" stroke-width="1.5"/>
<line x1="1003.1" y1="296.3" x2="1005.7" y2="298.9" stroke="#fff" stroke-width="1.5"/>
<line x1="1003.3" y1="272.5" x2="1005.9" y2="275.1" stroke="#fff" stroke-width="1.5"/>
<line x1="1172.5" y1="1227" x2="1175.1" y2="1229.6" stroke="#fff" stroke-width="1.5"/>
<line x1="1173" y1="1203.3" x2="1175.6" y2="1205.9" stroke="#fff" stroke-width="1.5"/>
<line x1="1173.6" y1="1179.5" x2="1176.2" y2="1182.1" stroke="#fff" stroke-width="1.5"/>
<line x1="1174.2" y1="1155.8" x2="1176.8" y2="1158.4" stroke="#fff" stroke-width="1.5"/>
<line x1="1174.8" y1="1132.1" x2="1177.4" y2="1134.7" stroke="#fff" stroke-width="1.5"/>
<line x1="1176.4" y1="1108.4" x2="1179" y2="1111" stroke="#fff" stroke-width="1.5"/>
<line x1="1178" y1="1084.6" x2="1180.6" y2="1087.2" stroke="#fff" stroke-width="1.5"/>
<line x1="1179.6" y1="1060.9" x2="1182.2" y2="1063.5" stroke="#fff" stroke-width="1.5"/>
<line x1="1181.2" y1="1037.2" x2="1183.8" y2="1039.8" stroke="#fff" stroke-width="1.5"/>
<line x1="1179.6" y1="1013.1" x2="1182.2" y2="1015.7" stroke="#fff" stroke-width="1.5"/>
<line x1="1178.1" y1="989" x2="1180.7" y2="991.6" stroke="#fff" stroke-width="1.5"/>
<line x1="1176.5" y1="964.9" x2="1179.1" y2="967.5" stroke="#fff" stroke-width="1.5"/>
<line x1="1175" y1="940.8" x2="1177.6" y2="943.4" stroke="#fff" stroke-width="1.5"/>
<line x1="1175.5" y1="916.8" x2="1178.1" y2="919.4" stroke="#fff" stroke-width="1.5"/>
<line x1="1176.1" y1="892.9" x2="1178.7" y2="895.5" stroke="#fff" stroke-width="1.5"/>
<line x1="1176.7" y1="869" x2="1179.3" y2="871.5" stroke="#fff" stroke-width="1.5"/>
<line x1="1177.3" y1="845" x2="1179.9" y2="847.6" stroke="#fff" stroke-width="1.5"/>
<line x1="1178.9" y1="821.3" x2="1181.5" y2="823.9" stroke="#fff" stroke-width="1.5"/>
<line x1="1180.6" y1="797.6" x2="1183.2" y2="800.2" stroke="#fff" stroke-width="1.5"/>
<line x1="1182.3" y1="773.9" x2="1184.9" y2="776.5" stroke="#fff" stroke-width="1.5"/>
<line x1="1184" y1="750.2" x2="1186.6" y2="752.8" stroke="#fff" stroke-width="1.5"/>
<line x1="1185.6" y1="726.3" x2="1188.2" y2="728.9" stroke="#fff" stroke-width="1.5"/>
<line x1="1187.2" y1="702.5" x2="1189.8" y2="705" stroke="#fff" stroke-width="1.5"/>
<line x1="1188.8" y1="678.6" x2="1191.4" y2="681.2" stroke="#fff" stroke-width="1.5"/>
<line x1="1190.4" y1="654.7" x2="1193" y2="657.3" stroke="#fff" stroke-width="1.5"/>
<line x1="1191.8" y1="630.7" x2="1194.4" y2="633.3" stroke="#fff" stroke-width="1.5"/>
<line x1="1193.3" y1="606.8" x2="1195.9" y2="609.3" stroke="#fff" stroke-width="1.5"/>
<line x1="1194.8" y1="582.8" x2="1197.4" y2="585.4" stroke="#fff" stroke-width="1.5"/>
<line x1="1196.3" y1="558.8" x2="1198.9" y2="561.4" stroke="#fff" stroke-width="1.5"/>
<line x1="1197.4" y1="534.9" x2="1200" y2="537.5" stroke="#fff" stroke-width="1.5"/>
<line x1="1198.5" y1="511" x2="1201.1" y2="513.6" stroke="#fff" stroke-width="1.5"/>
<line x1="1199.6" y1="487.1" x2="1202.2" y2="489.7" stroke="#fff" stroke-width="1.5"/>
<line x1="1200.8" y1="463.2" x2="1203.4" y2="465.8" stroke="#fff" stroke-width="1.5"/>
<line x1="1201.6" y1="439.3" x2="1204.2" y2="441.9" stroke="#fff" stroke-width="1.5"/>
<line x1="1202.4" y1="415.5" x2="1205" y2="418.1" stroke="#fff" stroke-width="1.5"/>
<line x1="1203.2" y1="391.6" x2="1205.8" y2="394.2" stroke="#fff" stroke-width="1.5"/>
<line x1="1204" y1="367.8" x2="1206.6" y2="370.4" stroke="#fff" stroke-width="1.5"/>
<line x1="1204.2" y1="344" x2="1206.8" y2="346.6" stroke="#fff" stroke-width="1.5"/>
<line x1="1204.5" y1="320.1" x2="1207.1" y2="322.7" stroke="#fff" stroke-width="1.5"/>
<line x1="1204.7" y1="296.3" x2="1207.3" y2="298.9" stroke="#fff" stroke-width="1.5"/>
<line x1="1205" y1="272.5" x2="1207.6" y2="275.1" stroke="#fff" stroke-width="1.5"/>
<line x1="1374.1" y1="1227" x2="1376.7" y2="1229.6" stroke="#fff" stroke-width="1.5"/>
<line x1="1374.7" y1="1203.3" x2="1377.3" y2="1205.9" stroke="#fff" stroke-width="1.5"/>
<line x1="1375.2" y1="1179.5" x2="1377.8" y2="1182.1" stroke="#fff" stroke-width="1.5"/>
<line x1="1375.8" y1="1155.8" x2="1378.4" y2="1158.4" stroke="#fff" stroke-width="1.5"/>
<line x1="1376.4" y1="1132.1" x2="1379" y2="1134.7" stroke="#fff" stroke-width="1.5"/>
<line x1="1378" y1="1108.4" x2="1380.6" y2="1111" stroke="#fff" stroke-width="1.5"/>
<line x1="1379.6" y1="1084.6" x2="1382.2" y2="1087.2" stroke="#fff" stroke-width="1.5"/>
<line x1="1381.2" y1="1060.9" x2="1383.8" y2="1063.5" stroke="#fff" stroke-width="1.5"/>
<line x1="1382.8" y1="1037.2" x2="1385.4" y2="1039.8" stroke="#fff" stroke-width="1.5"/>
<line x1="1381.2" y1="1013.1" x2="1383.8" y2="1015.7" stroke="#fff" stroke-width="1.5"/>
<line x1="1379.7" y1="989" x2="1382.3" y2="991.6" stroke="#fff" stroke-width="1.5"/>
<line x1="1378.1" y1="964.9" x2="1380.7" y2="967.5" stroke="#fff" stroke-width="1.5"/>
<line x1="1376.6" y1="940.8" x2="1379.2" y2="943.4" stroke="#fff" stroke-width="1.5"/>
<line x1="1377.2" y1="916.8" x2="1379.8" y2="919.4" stroke="#fff" stroke-width="1.5"/>
<line x1="1377.7" y1="892.9" x2="1380.3" y2="895.5" stroke="#fff" stroke-width="1.5"/>
<line x1="1378.3" y1="869" x2="1380.9" y2="871.5" stroke="#fff" stroke-width="1.5"/>
<line x1="1378.9" y1="845" x2="1381.5" y2="847.6" stroke="#fff" stroke-width="1.5"/>
<line x1="1380.6" y1="821.3" x2="1383.2" y2="823.9" stroke="#fff" stroke-width="1.5"/>
<line x1="1382.2" y1="797.6" x2="1384.8" y2="800.2" stroke="#fff" stroke-width="1.5"/>
<line x1="1383.9" y1="773.9" x2="1386.5" y2="776.5" stroke="#fff" stroke-width="1.5"/>
<line x1="1385.6" y1="750.2" x2="1388.2" y2="752.8" stroke="#fff" stroke-width="1.5"/>
<line x1="1387.2" y1="726.3" x2="1389.8" y2="728.9" stroke="#fff" stroke-width="1.5"/>
<line x1="1388.8" y1="702.5" x2="1391.4" y2="705" stroke="#fff" stroke-width="1.5"/>
<line x1="1390.4" y1="678.6" x2="1393" y2="681.2" stroke="#fff" stroke-width="1.5"/>
<line x1="1392" y1="654.7" x2="1394.6" y2="657.3" stroke="#fff" stroke-width="1.5"/>
<line x1="1393.5" y1="630.7" x2="1396.1" y2="633.3" stroke="#fff" stroke-width="1.5"/>
<line x1="1394.9" y1="606.8" x2="1397.5" y2="609.3" stroke="#fff" stroke-width="1.5"/>
<line x1="1396.4" y1="582.8" x2="1399" y2="585.4" stroke="#fff" stroke-width="1.5"/>
<line x1="1397.9" y1="558.8" x2="1400.5" y2="561.4" stroke="#fff" stroke-width="1.5"/>
<line x1="1399" y1="534.9" x2="1401.6" y2="537.5" stroke="#fff" stroke-width="1.5"/>
<line x1="1400.1" y1="511" x2="1402.7" y2="513.6" stroke="#fff" stroke-width="1.5"/>
<line x1="1401.3" y1="487.1" x2="1403.9" y2="489.7" stroke="#fff" stroke-width="1.5"/>
<line x1="1402.4" y1="463.2" x2="1405" y2="465.8" stroke="#fff" stroke-width="1.5"/>
<line x1="1403.2" y1="439.3" x2="1405.8" y2="441.9" stroke="#fff" stroke-width="1.5"/>
<line x1="1404" y1="415.5" x2="1406.6" y2="418.1" stroke="#fff" stroke-width="1.5"/>
<line x1="1404.8" y1="391.6" x2="1407.4" y2="394.2" stroke="#fff" stroke-width="1.5"/>
<line x1="1405.6" y1="367.8" x2="1408.2" y2="370.4" stroke="#fff" stroke-width="1.5"/>
<line x1="1405.8" y1="344" x2="1408.4" y2="346.6" stroke="#fff" stroke-width="1.5"/>
<line x1="1406.1" y1="320.1" x2="1408.7" y2="322.7" stroke="#fff" stroke-width="1.5"/>
<line x1="1406.3" y1="296.3" x2="1408.9" y2="298.9" stroke="#fff" stroke-width="1.5"/>
<line x1="1406.6" y1="272.5" x2="1409.2" y2="275.1" stroke="#fff" stroke-width="1.5"/>
<line x1="1575.7" y1="1227" x2="1578.3" y2="1229.6" stroke="#fff" stroke-width="1.5"/>
<line x1="1578" y1="1137.2" x2="1580.6" y2="1139.8" stroke="#fff" stroke-width="1.5"/>
<line x1="1584.4" y1="1046.8" x2="1587" y2="1049.4" stroke="#fff" stroke-width="1.5"/>
<line x1="1578.2" y1="955.3" x2="1580.8" y2="957.9" stroke="#fff" stroke-width="1.5"/>
<line x1="1580.5" y1="863.8" x2="1583.1" y2="866.4" stroke="#fff" stroke-width="1.5"/>
<line x1="1587.2" y1="771.9" x2="1589.8" y2="774.5" stroke="#fff" stroke-width="1.5"/>
<line x1="1593.6" y1="678.3" x2="1596.2" y2="680.9" stroke="#fff" stroke-width="1.5"/>
<line x1="1599.5" y1="585" x2="1602.1" y2="587.6" stroke="#fff" stroke-width="1.5"/>
<line x1="1604" y1="491.2" x2="1606.6" y2="493.8" stroke="#fff" stroke-width="1.5"/>
<line x1="1607.2" y1="396.6" x2="1609.8" y2="399.2" stroke="#fff" stroke-width="1.5"/>
<line x1="1608.2" y1="302" x2="1610.8" y2="304.6" stroke="#fff" stroke-width="1.5"/>
<line x1="821.9" y1="1133.4" x2="824.5" y2="1136" stroke="#fff" stroke-width="1.5"/>
<line x1="872.3" y1="1133.8" x2="874.9" y2="1136.4" stroke="#fff" stroke-width="1.5"/>
<line x1="922.7" y1="1133.4" x2="925.3" y2="1136" stroke="#fff" stroke-width="1.5"/>
<line x1="1023.5" y1="1133.4" x2="1026.1" y2="1136" stroke="#fff" stroke-width="1.5"/>
<line x1="1074" y1="1133.8" x2="1076.5" y2="1136.4" stroke="#fff" stroke-width="1.5"/>
<line x1="1124.4" y1="1133.4" x2="1127" y2="1136" stroke="#fff" stroke-width="1.5"/>
<line x1="1225.2" y1="1133.4" x2="1227.8" y2="1136" stroke="#fff" stroke-width="1.5"/>
<line x1="1275.6" y1="1133.8" x2="1278.2" y2="1136.4" stroke="#fff" stroke-width="1.5"/>
<line x1="1326" y1="1133.4" x2="1328.6" y2="1136" stroke="#fff" stroke-width="1.5"/>
<line x1="828.3" y1="1038.5" x2="830.9" y2="1041.1" stroke="#fff" stroke-width="1.5"/>
<line x1="878.7" y1="1039" x2="881.3" y2="1041.5" stroke="#fff" stroke-width="1.5"/>
<line x1="929.1" y1="1038.5" x2="931.7" y2="1041.1" stroke="#fff" stroke-width="1.5"/>
<line x1="1029.9" y1="1038.5" x2="1032.5" y2="1041.1" stroke="#fff" stroke-width="1.5"/>
<line x1="1080.4" y1="1039" x2="1083" y2="1041.5" stroke="#fff" stroke-width="1.5"/>
<line x1="1130.8" y1="1038.5" x2="1133.4" y2="1041.1" stroke="#fff" stroke-width="1.5"/>
<line x1="1231.6" y1="1038.5" x2="1234.2" y2="1041.1" stroke="#fff" stroke-width="1.5"/>
<line x1="1282" y1="1039" x2="1284.6" y2="1041.5" stroke="#fff" stroke-width="1.5"/>
<line x1="1332.4" y1="1038.5" x2="1335" y2="1041.1" stroke="#fff" stroke-width="1.5"/>
<line x1="822.1" y1="942.1" x2="824.7" y2="944.7" stroke="#fff" stroke-width="1.5"/>
<line x1="872.5" y1="942.5" x2="875.1" y2="945.1" stroke="#fff" stroke-width="1.5"/>
<line x1="922.9" y1="942.1" x2="925.5" y2="944.7" stroke="#fff" stroke-width="1.5"/>
<line x1="1023.7" y1="942.1" x2="1026.3" y2="944.7" stroke="#fff" stroke-width="1.5"/>
<line x1="1074.2" y1="942.5" x2="1076.8" y2="945.1" stroke="#fff" stroke-width="1.5"/>
<line x1="1124.6" y1="942.1" x2="1127.2" y2="944.7" stroke="#fff" stroke-width="1.5"/>
<line x1="1225.4" y1="942.1" x2="1228" y2="944.7" stroke="#fff" stroke-width="1.5"/>
<line x1="1275.8" y1="942.5" x2="1278.4" y2="945.1" stroke="#fff" stroke-width="1.5"/>
<line x1="1326.2" y1="942.1" x2="1328.8" y2="944.7" stroke="#fff" stroke-width="1.5"/>
<line x1="824.4" y1="846.3" x2="827" y2="848.9" stroke="#fff" stroke-width="1.5"/>
<line x1="874.8" y1="846.8" x2="877.4" y2="849.3" stroke="#fff" stroke-width="1.5"/>
<line x1="925.2" y1="846.3" x2="927.8" y2="848.9" stroke="#fff" stroke-width="1.5"/>
<line x1="1026" y1="846.3" x2="1028.6" y2="848.9" stroke="#fff" stroke-width="1.5"/>
<line x1="1076.5" y1="846.8" x2="1079" y2="849.3" stroke="#fff" stroke-width="1.5"/>
<line x1="1126.9" y1="846.3" x2="1129.5" y2="848.9" stroke="#fff" stroke-width="1.5"/>
<line x1="1227.7" y1="846.3" x2="1230.3" y2="848.9" stroke="#fff" stroke-width="1.5"/>
<line x1="1278.1" y1="846.8" x2="1280.7" y2="849.3" stroke="#fff" stroke-width="1.5"/>
<line x1="1328.5" y1="846.3" x2="1331.1" y2="848.9" stroke="#fff" stroke-width="1.5"/>
<line x1="831.1" y1="751.5" x2="833.7" y2="754.1" stroke="#fff" stroke-width="1.5"/>
<line x1="881.5" y1="752" x2="884.1" y2="754.5" stroke="#fff" stroke-width="1.5"/>
<line x1="931.9" y1="751.5" x2="934.5" y2="754.1" stroke="#fff" stroke-width="1.5"/>
<line x1="1032.7" y1="751.5" x2="1035.3" y2="754.1" stroke="#fff" stroke-width="1.5"/>
<line x1="1083.2" y1="752" x2="1085.8" y2="754.5" stroke="#fff" stroke-width="1.5"/>
<line x1="1133.6" y1="751.5" x2="1136.2" y2="754.1" stroke="#fff" stroke-width="1.5"/>
<line x1="1234.4" y1="751.5" x2="1237" y2="754.1" stroke="#fff" stroke-width="1.5"/>
<line x1="1284.8" y1="752" x2="1287.4" y2="754.5" stroke="#fff" stroke-width="1.5"/>
<line x1="1335.2" y1="751.5" x2="1337.8" y2="754.1" stroke="#fff" stroke-width="1.5"/>
<line x1="837.5" y1="656" x2="840.1" y2="658.6" stroke="#fff" stroke-width="1.5"/>
<line x1="887.9" y1="656.4" x2="890.5" y2="659" stroke="#fff" stroke-width="1.5"/>
<line x1="938.3" y1="656" x2="940.9" y2="658.6" stroke="#fff" stroke-width="1.5"/>
<line x1="1039.1" y1="656" x2="1041.7" y2="658.6" stroke="#fff" stroke-width="1.5"/>
<line x1="1089.5" y1="656.4" x2="1092.1" y2="659" stroke="#fff" stroke-width="1.5"/>
<line x1="1140" y1="656" x2="1142.6" y2="658.6" stroke="#fff" stroke-width="1.5"/>
<line x1="1240.8" y1="656" x2="1243.4" y2="658.6" stroke="#fff" stroke-width="1.5"/>
<line x1="1291.2" y1="656.4" x2="1293.8" y2="659" stroke="#fff" stroke-width="1.5"/>
<line x1="1341.6" y1="656" x2="1344.2" y2="658.6" stroke="#fff" stroke-width="1.5"/>
<line x1="843.4" y1="560.1" x2="846" y2="562.7" stroke="#fff" stroke-width="1.5"/>
<line x1="893.8" y1="560.5" x2="896.4" y2="563.1" stroke="#fff" stroke-width="1.5"/>
<line x1="944.2" y1="560.1" x2="946.8" y2="562.7" stroke="#fff" stroke-width="1.5"/>
<line x1="1045" y1="560.1" x2="1047.6" y2="562.7" stroke="#fff" stroke-width="1.5"/>
<line x1="1095.5" y1="560.5" x2="1098" y2="563.1" stroke="#fff" stroke-width="1.5"/>
<line x1="1145.9" y1="560.1" x2="1148.5" y2="562.7" stroke="#fff" stroke-width="1.5"/>
<line x1="1246.7" y1="560.1" x2="1249.3" y2="562.7" stroke="#fff" stroke-width="1.5"/>
<line x1="1297.1" y1="560.5" x2="1299.7" y2="563.1" stroke="#fff" stroke-width="1.5"/>
<line x1="1347.5" y1="560.1" x2="1350.1" y2="562.7" stroke="#fff" stroke-width="1.5"/>
<line x1="847.9" y1="464.5" x2="850.5" y2="467.1" stroke="#fff" stroke-width="1.5"/>
<line x1="898.3" y1="464.9" x2="900.9" y2="467.5" stroke="#fff" stroke-width="1.5"/>
<line x1="948.7" y1="464.5" x2="951.3" y2="467.1" stroke="#fff" stroke-width="1.5"/>
<line x1="1049.5" y1="464.5" x2="1052.1" y2="467.1" stroke="#fff" stroke-width="1.5"/>
<line x1="1100" y1="464.9" x2="1102.5" y2="467.5" stroke="#fff" stroke-width="1.5"/>
<line x1="1150.4" y1="464.5" x2="1153" y2="467.1" stroke="#fff" stroke-width="1.5"/>
<line x1="1251.2" y1="464.5" x2="1253.8" y2="467.1" stroke="#fff" stroke-width="1.5"/>
<line x1="1301.6" y1="464.9" x2="1304.2" y2="467.5" stroke="#fff" stroke-width="1.5"/>
<line x1="1352" y1="464.5" x2="1354.6" y2="467.1" stroke="#fff" stroke-width="1.5"/>
<line x1="851.1" y1="369.1" x2="853.7" y2="371.7" stroke="#fff" stroke-width="1.5"/>
<line x1="901.5" y1="369.5" x2="904.1" y2="372.1" stroke="#fff" stroke-width="1.5"/>
<line x1="951.9" y1="369.1" x2="954.5" y2="371.7" stroke="#fff" stroke-width="1.5"/>
<line x1="1052.7" y1="369.1" x2="1055.3" y2="371.7" stroke="#fff" stroke-width="1.5"/>
<line x1="1103.2" y1="369.5" x2="1105.8" y2="372.1" stroke="#fff" stroke-width="1.5"/>
<line x1="1153.6" y1="369.1" x2="1156.2" y2="371.7" stroke="#fff" stroke-width="1.5"/>
<line x1="1254.4" y1="369.1" x2="1257" y2="371.7" stroke="#fff" stroke-width="1.5"/>
<line x1="1304.8" y1="369.5" x2="1307.4" y2="372.1" stroke="#fff" stroke-width="1.5"/>
<line x1="1355.2" y1="369.1" x2="1357.8" y2="371.7" stroke="#fff" stroke-width="1.5"/>
<line x1="852.1" y1="273.8" x2="854.7" y2="276.4" stroke="#fff" stroke-width="1.5"/>
<line x1="902.5" y1="274.2" x2="905.1" y2="276.8" stroke="#fff" stroke-width="1.5"/>
<line x1="952.9" y1="273.8" x2="955.5" y2="276.4" stroke="#fff" stroke-width="1.5"/>
<line x1="1053.7" y1="273.8" x2="1056.3" y2="276.4" stroke="#fff" stroke-width="1.5"/>
<line x1="1104.2" y1="274.2" x2="1106.8" y2="276.8" stroke="#fff" stroke-width="1.5"/>
<line x1="1154.6" y1="273.8" x2="1157.2" y2="276.4" stroke="#fff" stroke-width="1.5"/>
<line x1="1255.4" y1="273.8" x2="1258" y2="276.4" stroke="#fff" stroke-width="1.5"/>
<line x1="1305.8" y1="274.2" x2="1308.4" y2="276.8" stroke="#fff" stroke-width="1.5"/>
<line x1="1356.2" y1="273.8" x2="1358.8" y2="276.4" stroke="#fff" stroke-width="1.5"/>
<line x1="511.9" y1="1228.3" x2="565.9" y2="1228.3" stroke="#f00" stroke-width="3"/>
<path d="M564.4 1228.3 L550.4 1235.8 L550.4 1220.8 Z" fill="none" stroke="#f00" stroke-width="3" stroke-linejoin="miter"/>
<line x1="568.9" y1="1285.3" x2="568.9" y2="1231.3" stroke="#f00" stroke-width="3"/>
<path d="M568.9 1232.8 L576.4 1246.8 L561.4 1246.8 Z" fill="none" stroke="#f00" stroke-width="3" stroke-linejoin="miter"/>
<circle cx="568.9" cy="1228.3" r="3" fill="#fff"/>
<line x1="713.5" y1="1228.3" x2="767.5" y2="1228.3" stroke="#f00" stroke-width="3"/>
<path d="M766 1228.3 L752 1235.8 L752 1220.8 Z" fill="none" stroke="#f00" stroke-width="3" stroke-linejoin="miter"/>
<line x1="770.5" y1="1285.3" x2="770.5" y2="1231.3" stroke="#f00" stroke-width="3"/>
<path d="M770.5 1232.8 L778 1246.8 L763 1246.8 Z" fill="none" stroke="#f00" stroke-width="3" stroke-linejoin="miter"/>
<path d="M791.7 1207.1 A30 30 0 1 0 776.8 1257.6" fill="none" stroke="#f00" stroke-width="3"/>
<path d="M792.5 1249.3 L784.6 1261.3 L778.3 1251.1 Z" fill="none" stroke="#f00" stroke-width="3" stroke-linejoin="miter"/>
<circle cx="770.5" cy="1228.3" r="3" fill="#fff"/>
<line x1="915.1" y1="1228.3" x2="969.1" y2="1228.3" stroke="#f00" stroke-width="3"/>
<path d="M967.6 1228.3 L953.6 1235.8 L953.6 1220.8 Z" fill="none" stroke="#f00" stroke-width="3" stroke-linejoin="miter"/>
<line x1="972.1" y1="1285.3" x2="972.1" y2="1231.3" stroke="#f00" stroke-width="3"/>
<path d="M972.1 1232.8 L979.6 1246.8 L964.6 1246.8 Z" fill="none" stroke="#f00" stroke-width="3" stroke-linejoin="miter"/>
<path d="M993.4 1207.1 A30 30 0 1 0 978.4 1257.6" fill="none" stroke="#f00" stroke-width="3"/>
<path d="M994.1 1249.3 L986.3 1261.3 L979.9 1251.1 Z" fill="none" stroke="#f00" stroke-width="3" stroke-linejoin="miter"/>
<circle cx="972.1" cy="1228.3" r="3" fill="#fff"/>
<line x1="1116.8" y1="1228.3" x2="1170.8" y2="1228.3" stroke="#f00" stroke-width="3"/>
<path d="M1169.3 1228.3 L1155.3 1235.8 L1155.3 1220.8 Z" fill="none" stroke="#f00" stroke-width="3" stroke-linejoin="miter"/>
<line x1="1173.8" y1="1285.3" x2="1173.8" y2="1231.3" stroke="#f00" stroke-width="3"/>
<path d="M1173.8 1232.8 L1181.3 1246.8 L1166.3 1246.8 Z" fill="none" stroke="#f00" stroke-width="3" stroke-linejoin="miter"/>
<path d="M1195 1207.1 A30 30 0 1 0 1180 1257.6" fill="none" stroke="#f00" stroke-width="3"/>
<path d="M1195.8 1249.3 L1187.9 1261.3 L1181.5 1251.1 Z" fill="none" stroke="#f00" stroke-width="3" stroke-linejoin="miter"/>
<circle cx="1173.8" cy="1228.3" r="3" fill="#fff"/>
<line x1="1318.4" y1="1228.3" x2="1372.4" y2="1228.3" stroke="#f00" stroke-width="3"/>
<path d="M1370.9 1228.3 L1356.9 1235.8 L1356.9 1220.8 Z" fill="none" stroke="#f00" stroke-width="3" stroke-linejoin="miter"/>
<line x1="1375.4" y1="1285.3" x2="1375.4" y2="1231.3" stroke="#f00" stroke-width="3"/>
<path d="M1375.4 1232.8 L1382.9 1246.8 L1367.9 1246.8 Z" fill="none" stroke="#f00" stroke-width="3" stroke-linejoin="miter"/>
<path d="M1396.6 1207.1 A30 30 0 1 0 1381.6 1257.6" fill="none" stroke="#f00" stroke-width="3"/>
<path d="M1397.4 1249.3 L1389.5 1261.3 L1383.2 1251.1 Z" fill="none" stroke="#f00" stroke-width="3" stroke-linejoin="miter"/>
<circle cx="1375.4" cy="1228.3" r="3" fill="#fff"/>
<line x1="1520" y1="1228.3" x2="1574" y2="1228.3" stroke="#f00" stroke-width="3"/>
<path d="M1572.5 1228.3 L1558.5 1235.8 L1558.5 1220.8 Z" fill="none" stroke="#f00" stroke-width="3" stroke-linejoin="miter"/>
<line x1="1577" y1="1285.3" x2="1577" y2="1231.3" stroke="#f00" stroke-width="3"/>
<path d="M1577 1232.8 L1584.5 1246.8 L1569.5 1246.8 Z" fill="none" stroke="#f00" stroke-width="3" stroke-linejoin="miter"/>
<circle cx="1577" cy="1228.3" r="3" fill="#fff"/>
<path d="M992.4 560.1 L962.9 571.4 L962.9 548.8 Z" fill="none" stroke="#ffff00" stroke-width="4.3" stroke-linejoin="miter" stroke-miterlimit="10"/>
<line x1="962.9" y1="560.1" x2="992.4" y2="560.1" stroke="#ffff00" stroke-width="2"/>
<path d="M1194.1 560.1 L1164.6 571.4 L1164.6 548.8 Z" fill="none" stroke="#ffff00" stroke-width="4.3" stroke-linejoin="miter" stroke-miterlimit="10"/>
<line x1="1164.6" y1="560.1" x2="1194.1" y2="560.1" stroke="#ffff00" stroke-width="2"/>
<path d="M986.5 656 L957 667.3 L957 644.7 Z" fill="none" stroke="#ffff00" stroke-width="4.3" stroke-linejoin="miter" stroke-miterlimit="10"/>
<line x1="957" y1="656" x2="986.5" y2="656" stroke="#ffff00" stroke-width="2"/>
<path d="M1188.2 656 L1158.7 667.3 L1158.7 644.7 Z" fill="none" stroke="#ffff00" stroke-width="4.3" stroke-linejoin="miter" stroke-miterlimit="10"/>
<line x1="1158.7" y1="656" x2="1188.2" y2="656" stroke="#ffff00" stroke-width="2"/>
<path d="M1389.8 656 L1360.3 667.3 L1360.3 644.7 Z" fill="none" stroke="#ffff00" stroke-width="4.3" stroke-linejoin="miter" stroke-miterlimit="10"/>
<line x1="1360.3" y1="656" x2="1389.8" y2="656" stroke="#ffff00" stroke-width="2"/>
<path d="M980.1 751.5 L950.6 762.8 L950.6 740.2 Z" fill="none" stroke="#ffff00" stroke-width="4.3" stroke-linejoin="miter" stroke-miterlimit="10"/>
<line x1="950.6" y1="751.5" x2="980.1" y2="751.5" stroke="#ffff00" stroke-width="2"/>
<path d="M1181.8 751.5 L1152.3 762.8 L1152.3 740.2 Z" fill="none" stroke="#ffff00" stroke-width="4.3" stroke-linejoin="miter" stroke-miterlimit="10"/>
<line x1="1152.3" y1="751.5" x2="1181.8" y2="751.5" stroke="#ffff00" stroke-width="2"/>
<path d="M1383.4 751.5 L1353.9 762.8 L1353.9 740.2 Z" fill="none" stroke="#ffff00" stroke-width="4.3" stroke-linejoin="miter" stroke-miterlimit="10"/>
<line x1="1353.9" y1="751.5" x2="1383.4" y2="751.5" stroke="#ffff00" stroke-width="2"/>
<path d="M973.4 846.3 L943.9 857.6 L943.9 835 Z" fill="none" stroke="#ffff00" stroke-width="4.3" stroke-linejoin="miter" stroke-miterlimit="10"/>
<line x1="943.9" y1="846.3" x2="973.4" y2="846.3" stroke="#ffff00" stroke-width="2"/>
<path d="M1175.1 846.3 L1145.6 857.6 L1145.6 835 Z" fill="none" stroke="#ffff00" stroke-width="4.3" stroke-linejoin="miter" stroke-miterlimit="10"/>
<line x1="1145.6" y1="846.3" x2="1175.1" y2="846.3" stroke="#ffff00" stroke-width="2"/>
<path d="M1376.7 846.3 L1347.2 857.6 L1347.2 835 Z" fill="none" stroke="#ffff00" stroke-width="4.3" stroke-linejoin="miter" stroke-miterlimit="10"/>
<line x1="1347.2" y1="846.3" x2="1376.7" y2="846.3" stroke="#ffff00" stroke-width="2"/>
<path d="M971.1 942.1 L941.6 953.4 L941.6 930.8 Z" fill="none" stroke="#ffff00" stroke-width="4.3" stroke-linejoin="miter" stroke-miterlimit="10"/>
<line x1="941.6" y1="942.1" x2="971.1" y2="942.1" stroke="#ffff00" stroke-width="2"/>
<path d="M1172.8 942.1 L1143.3 953.4 L1143.3 930.8 Z" fill="none" stroke="#ffff00" stroke-width="4.3" stroke-linejoin="miter" stroke-miterlimit="10"/>
<line x1="1143.3" y1="942.1" x2="1172.8" y2="942.1" stroke="#ffff00" stroke-width="2"/>
<path d="M977.3 1038.5 L947.8 1049.8 L947.8 1027.2 Z" fill="none" stroke="#ffff00" stroke-width="4.3" stroke-linejoin="miter" stroke-miterlimit="10"/>
<line x1="947.8" y1="1038.5" x2="977.3" y2="1038.5" stroke="#ffff00" stroke-width="2"/>
<path d="M1179 1038.5 L1149.5 1049.8 L1149.5 1027.2 Z" fill="none" stroke="#ffff00" stroke-width="4.3" stroke-linejoin="miter" stroke-miterlimit="10"/>
<line x1="1149.5" y1="1038.5" x2="1179" y2="1038.5" stroke="#ffff00" stroke-width="2"/>
<path d="M1380.6 1038.5 L1351.1 1049.8 L1351.1 1027.2 Z" fill="none" stroke="#ffff00" stroke-width="4.3" stroke-linejoin="miter" stroke-miterlimit="10"/>
<line x1="1351.1" y1="1038.5" x2="1380.6" y2="1038.5" stroke="#ffff00" stroke-width="2"/>
<path d="M970.9 1133.4 L941.4 1144.7 L941.4 1122.1 Z" fill="none" stroke="#ffff00" stroke-width="4.3" stroke-linejoin="miter" stroke-miterlimit="10"/>
<line x1="941.4" y1="1133.4" x2="970.9" y2="1133.4" stroke="#ffff00" stroke-width="2"/>
<path d="M1172.6 1133.4 L1143.1 1144.7 L1143.1 1122.1 Z" fill="none" stroke="#ffff00" stroke-width="4.3" stroke-linejoin="miter" stroke-miterlimit="10"/>
<line x1="1143.1" y1="1133.4" x2="1172.6" y2="1133.4" stroke="#ffff00" stroke-width="2"/>
<path d="M1374.2 1133.4 L1344.7 1144.7 L1344.7 1122.1 Z" fill="none" stroke="#ffff00" stroke-width="4.3" stroke-linejoin="miter" stroke-miterlimit="10"/>
<line x1="1344.7" y1="1133.4" x2="1374.2" y2="1133.4" stroke="#ffff00" stroke-width="2"/>
<path d="M977.4 852.8 L988.7 882.3 L966.1 882.3 Z" fill="none" stroke="#ffff00" stroke-width="4.3" stroke-linejoin="miter" stroke-miterlimit="10"/>
<line x1="977.4" y1="882.3" x2="977.4" y2="852.8" stroke="#ffff00" stroke-width="2"/>
<path d="M1377.9 937.6 L1366.6 908.1 L1389.2 908.1 Z" fill="none" stroke="#ffff00" stroke-width="4.3" stroke-linejoin="miter" stroke-miterlimit="10"/>
<line x1="1377.9" y1="908.1" x2="1377.9" y2="937.6" stroke="#ffff00" stroke-width="2"/>
<path d="M779.2 1034.5 L767.9 1005 L790.5 1005 Z" fill="none" stroke="#ffff00" stroke-width="4.3" stroke-linejoin="miter" stroke-miterlimit="10"/>
<line x1="779.2" y1="1005" x2="779.2" y2="1034.5" stroke="#ffff00" stroke-width="2"/>
<path d="M972.1 1223.3 L960.8 1193.8 L983.4 1193.8 Z" fill="none" stroke="#ffff00" stroke-width="4.3" stroke-linejoin="miter" stroke-miterlimit="10"/>
<line x1="972.1" y1="1193.8" x2="972.1" y2="1223.3" stroke="#ffff00" stroke-width="2"/>
<path d="M1173.8 1223.3 L1162.5 1193.8 L1185.1 1193.8 Z" fill="none" stroke="#ffff00" stroke-width="4.3" stroke-linejoin="miter" stroke-miterlimit="10"/>
<line x1="1173.8" y1="1193.8" x2="1173.8" y2="1223.3" stroke="#ffff00" stroke-width="2"/>
<path d="M1375.4 1223.3 L1364.1 1193.8 L1386.7 1193.8 Z" fill="none" stroke="#ffff00" stroke-width="4.3" stroke-linejoin="miter" stroke-miterlimit="10"/>
<line x1="1375.4" y1="1193.8" x2="1375.4" y2="1223.3" stroke="#ffff00" stroke-width="2"/>
<text x="910.4" y="0" fill="#ffff00" font-family="Liberation Sans" font-weight="bold" font-size="22" transform="translate(0 604.7) scale(1 1.09)">1.191</text>
<text x="1112.1" y="0" fill="#ffff00" font-family="Liberation Sans" font-weight="bold" font-size="22" transform="translate(0 604.7) scale(1 1.09)">1.191</text>
<text x="904.5" y="0" fill="#ffff00" font-family="Liberation Sans" font-weight="bold" font-size="22" transform="translate(0 700.6) scale(1 1.09)">1.191</text>
<text x="1106.2" y="0" fill="#ffff00" font-family="Liberation Sans" font-weight="bold" font-size="22" transform="translate(0 700.6) scale(1 1.09)">1.191</text>
<text x="1307.8" y="0" fill="#ffff00" font-family="Liberation Sans" font-weight="bold" font-size="22" transform="translate(0 700.6) scale(1 1.09)">1.191</text>
<text x="898.1" y="0" fill="#ffff00" font-family="Liberation Sans" font-weight="bold" font-size="22" transform="translate(0 796.1) scale(1 1.09)">1.191</text>
<text x="1099.8" y="0" fill="#ffff00" font-family="Liberation Sans" font-weight="bold" font-size="22" transform="translate(0 796.1) scale(1 1.09)">1.191</text>
<text x="1301.4" y="0" fill="#ffff00" font-family="Liberation Sans" font-weight="bold" font-size="22" transform="translate(0 796.1) scale(1 1.09)">1.191</text>
<text x="891.4" y="0" fill="#ffff00" font-family="Liberation Sans" font-weight="bold" font-size="22" transform="translate(0 890.9) scale(1 1.09)">1.191</text>
<text x="1093.1" y="0" fill="#ffff00" font-family="Liberation Sans" font-weight="bold" font-size="22" transform="translate(0 890.9) scale(1 1.09)">1.191</text>
<text x="1294.7" y="0" fill="#ffff00" font-family="Liberation Sans" font-weight="bold" font-size="22" transform="translate(0 890.9) scale(1 1.09)">1.191</text>
<text x="889.1" y="0" fill="#ffff00" font-family="Liberation Sans" font-weight="bold" font-size="22" transform="translate(0 986.7) scale(1 1.09)">1.191</text>
<text x="1090.8" y="0" fill="#ffff00" font-family="Liberation Sans" font-weight="bold" font-size="22" transform="translate(0 986.7) scale(1 1.09)">1.191</text>
<text x="895.3" y="0" fill="#ffff00" font-family="Liberation Sans" font-weight="bold" font-size="22" transform="translate(0 1083.1) scale(1 1.09)">1.191</text>
<text x="1097" y="0" fill="#ffff00" font-family="Liberation Sans" font-weight="bold" font-size="22" transform="translate(0 1083.1) scale(1 1.09)">1.191</text>
<text x="1298.6" y="0" fill="#ffff00" font-family="Liberation Sans" font-weight="bold" font-size="22" transform="translate(0 1083.1) scale(1 1.09)">1.191</text>
<text x="888.9" y="0" fill="#ffff00" font-family="Liberation Sans" font-weight="bold" font-size="22" transform="translate(0 1178) scale(1 1.09)">1.191</text>
<text x="1090.6" y="0" fill="#ffff00" font-family="Liberation Sans" font-weight="bold" font-size="22" transform="translate(0 1178) scale(1 1.09)">1.191</text>
<text x="1292.2" y="0" fill="#ffff00" font-family="Liberation Sans" font-weight="bold" font-size="22" transform="translate(0 1178) scale(1 1.09)">1.191</text>
<text x="922.7" y="0" fill="#ffff00" font-family="Liberation Sans" font-weight="bold" font-size="22" transform="translate(0 905.2) scale(1 1.09)">1.191</text>
<text x="1390.6" y="0" fill="#ffff00" font-family="Liberation Sans" font-weight="bold" font-size="22" transform="translate(0 894.6) scale(1 1.09)">1.191</text>
<text x="775.8" y="0" fill="#ffff00" font-family="Liberation Sans" font-weight="bold" font-size="22" transform="translate(0 990.9) scale(1 1.09)">1.191</text>
<text x="968.4" y="0" fill="#ffff00" font-family="Liberation Sans" font-weight="bold" font-size="22" transform="translate(0 1182.3) scale(1 1.09)">1.191</text>
<text x="1170.1" y="0" fill="#ffff00" font-family="Liberation Sans" font-weight="bold" font-size="22" transform="translate(0 1182.3) scale(1 1.09)">1.191</text>
<text x="1371.7" y="0" fill="#ffff00" font-family="Liberation Sans" font-weight="bold" font-size="22" transform="translate(0 1182.3) scale(1 1.09)">1.191</text>
<line x1="566.9" y1="1222.3" x2="566.9" y2="1164.3" stroke="#0f0" stroke-width="1.5"/>
<path d="M563.9 1172.3 L569.4 1172.3 L566.9 1158.3 Z" fill="#0f0"/>
<line x1="572.9" y1="1228.3" x2="630.9" y2="1228.3" stroke="#f07070" stroke-width="4.5"/>
<path d="M628.9 1222.8 L646.9 1228.3 L628.9 1233.8 Z" fill="#f07070"/>
<text x="653.3" y="1236.2" fill="#f07070" font-family="Liberation Sans" font-size="27">X</text>
<text x="569.7" y="1235.9" fill="#7373f0" font-family="Liberation Sans" font-size="27" text-anchor="middle">Z</text>
</svg>


<!-- axis widget -->
<svg class="a" style="left:1900px;top:120px" width="180" height="170" viewBox="1900 120 180 170">
<line x1="1981.6" y1="175" x2="1981.6" y2="197" stroke="#00cc00" stroke-width="2.2"/>
<line x1="2000" y1="215.4" x2="2022" y2="215.4" stroke="#f06060" stroke-width="2.2"/>
<line x1="1938" y1="215.4" x2="1962" y2="215.4" stroke="#f07070" stroke-width="2.2" stroke-dasharray="2 3"/>
<line x1="1981.6" y1="236" x2="1981.6" y2="258" stroke="#00cc00" stroke-width="2.2" stroke-dasharray="2 3"/>
<circle cx="1981.6" cy="156" r="18.6" fill="#00cc00"/>
<circle cx="1981.6" cy="215.4" r="18.6" fill="#6464f5"/>
<circle cx="2040.5" cy="215.4" r="18.6" fill="#f56464"/>
<circle cx="1930.8" cy="215.4" r="6.8" fill="#f56464"/>
<circle cx="1981.6" cy="266.2" r="6.8" fill="#00cc00"/>
<text x="1981.6" y="164" font-family="Liberation Sans" font-size="25" text-anchor="middle" fill="#111">Y</text>
<text x="1981.6" y="223.5" font-family="Liberation Sans" font-size="25" text-anchor="middle" fill="#111">Z</text>
<text x="2040.5" y="223.5" font-family="Liberation Sans" font-size="25" text-anchor="middle" fill="#111">X</text>
</svg>
<!-- toolbar -->
<svg class="a" style="left:2020px;top:340px" width="81" height="560" viewBox="2020 340 81 560">
<g fill="none" stroke="#fff" stroke-linejoin="round">
 <!-- iso cube outline -->
 <path d="M2065 355 L2080 362 L2077.5 380 L2065 388 L2052.5 380 L2050 362 Z" stroke-width="2.6"/>
 <path d="M2050 362 L2065 369 L2080 362 M2065 369 L2065 388" stroke-width="1.2"/>
</g>
<rect x="2044.3" y="397.8" width="41.5" height="42.1" rx="6" fill="#6b6b6b"/>
<circle cx="2031.8" cy="419" r="3.2" fill="#9a9a9a"/>
<g stroke="#fff" stroke-linejoin="round">
 <path d="M2065 403.5 L2080 411 L2080 427 L2065 435 L2050 427 L2050 411 Z" fill="#6b6b6b" stroke-width="2.6"/>
 <path d="M2050 411 L2065 418.5 L2080 411 M2065 418.5 L2065 435" fill="none" stroke-width="1.2"/>
</g>
<g fill="none" stroke="#555" stroke-width="3" stroke-linecap="round" stroke-linejoin="round">
 <path d="M2061 465 L2054 472.5 L2061 480 M2054 472.5 H2064 A7 7 0 0 1 2064 486.5 H2061"/>
 <path d="M2069 513.5 L2076 521 L2069 528.5 M2076 521 H2066 A7 7 0 0 0 2066 535 H2069"/>
</g>
<rect x="2044.3" y="548.2" width="41.5" height="41.5" rx="6" fill="#6b6b6b"/>
<circle cx="2031.8" cy="569" r="3.2" fill="#9a9a9a"/>
<path d="M2058 556 L2058 582 L2063 577 L2067 585 L2071 583 L2067 575 L2074.5 575 Z" fill="none" stroke="#fff" stroke-width="2.2" stroke-linejoin="miter"/>
<!-- move -->
<g fill="#fff">
 <path d="M2065 600.2 L2070.6 607.8 L2059.4 607.8 Z M2065 633.3 L2070.6 626 L2059.4 626 Z M2048.6 617 L2055.9 611.4 L2055.9 622.6 Z M2081.6 617 L2074.4 611.4 L2074.4 622.6 Z"/>
 <rect x="2063" y="607" width="4.1" height="5.9"/><rect x="2063" y="621" width="4.1" height="5.5"/>
 <rect x="2055" y="615" width="6" height="4.1"/><rect x="2069" y="615" width="6" height="4.1"/>
</g>
<!-- rotate -->
<g fill="none" stroke="#fff" stroke-width="2.2" stroke-linecap="butt">
 <path d="M2056.92 659.68 A15.5 6 0 0 0 2054.04 669.04"/>
 <path d="M2063.11 658.84 A15.5 6 0 1 1 2066.62 670.77"/>
 <path d="M2058.81 663.97 A6.2 15.8 0 0 1 2070.31 656.66"/>
 <path d="M2071.18 663.42 A6.2 15.8 0 0 1 2059.38 671.48"/>
</g>
<path d="M2056 672.2 L2063.5 672.2 L2059.6 667 Z" fill="#fff"/>
<!-- zoom in -->
<g fill="none" stroke="#fff">
 <circle cx="2061.2" cy="721" r="10.6" stroke-width="2.4"/>
 <path d="M2055.8 721 H2066.6 M2061.2 715.6 V726.4" stroke-width="2.6"/>
 <path d="M2072.8 732.8 L2078.6 738.6" stroke-width="4.2" stroke-linecap="round"/>
 <path d="M2069.6 729.6 L2070.9 730.9" stroke-width="2"/>
</g>
<!-- zoom out -->
<g fill="none" stroke="#fff">
 <circle cx="2061.2" cy="768.8" r="10.6" stroke-width="2.4"/>
 <path d="M2055.8 768.8 H2066.6" stroke-width="2.6"/>
 <path d="M2072.8 780.6 L2078.6 786.4" stroke-width="4.2" stroke-linecap="round"/>
 <path d="M2069.6 777.4 L2070.9 778.7" stroke-width="2"/>
</g>
<!-- fit -->
<g fill="none" stroke="#fff" stroke-width="3">
 <path d="M2050.3 813 V806.4 H2056.5 M2073.5 806.4 H2079.8 V813 M2079.8 829.5 V835.9 H2073.5 M2056.5 835.9 H2050.3 V829.5"/>
</g>
<path d="M2065 811 L2074 816 L2074 827.5 L2065 832.7 L2056 827.5 L2056 816 Z" fill="#8e8e8e"/>
<path d="M2065 813.6 L2069.6 817 L2065 820.3 L2060.4 817 Z" fill="#000"/>
<!-- eye -->
<path d="M2047.8 869 C2054 859 2059 856.7 2065 856.7 C2071 856.7 2076 859 2082.2 869 C2076 879 2071 881.2 2065 881.2 C2059 881.2 2054 879 2047.8 869 Z" fill="#d2d2d2"/>
<circle cx="2065" cy="869" r="7" fill="none" stroke="#000" stroke-width="3.4"/>
<rect x="2066.3" y="863.2" width="3.8" height="3.8" fill="#000"/>
</svg>

<div id="panel" class="a"></div>
<div id="pline" class="a"></div>
<div class="cell" style="left:11px;top:1339px;width:525px;height:33px;line-height:33px">Define element(s) and parameters</div>
<div class="cell" style="left:557px;top:1339px;width:168px;height:33px;line-height:33px">Element(s):</div>
<div class="inp" style="left:737px;top:1339px;width:345px;height:33px;line-height:33px">All</div>
<div class="btn" style="left:1094px;top:1340px;width:82px;height:31px;line-height:31px">All</div>
<div class="btn" style="left:1178px;top:1340px;width:82px;height:31px;line-height:31px">Clr</div>
<div class="btn" style="left:1262px;top:1340px;width:82px;height:31px;line-height:31px">Adv</div>
<div class="cell" style="left:1366px;top:1339px;width:168px;height:33px;line-height:33px">Status:</div>
<div class="cell" style="left:1554px;top:1339px;width:506px;height:33px;line-height:33px;background:#00ff00">Deflected Shape drawn.</div>

<div class="cell" style="left:11px;top:1380px;width:241px;height:33px;line-height:33px">Defl Line Type</div>
<div class="inp" style="left:253px;top:1380px;width:177px;height:33px;line-height:33px;text-align:left;padding-left:13px">Solid (Blue)</div>
<div class="cell" style="left:441px;top:1380px;width:148px;height:33px;line-height:33px">Scale</div>
<div class="inp" style="left:600px;top:1380px;width:135px;height:33px;line-height:33px">10</div>
<div class="cell" style="left:757px;top:1380px;width:168px;height:33px;line-height:33px"># of pts</div>
<div class="inp" style="left:936px;top:1380px;width:135px;height:33px;line-height:33px">10</div>
<div class="inp" style="left:1093px;top:1380px;width:189px;height:33px;line-height:33px;text-align:left;padding-left:81px">Animate</div>
<div class="a" style="left:1142px;top:1388px;width:18px;height:17px;border:1.5px solid #777;border-radius:3px;background:#fff"></div>
<div class="inp" style="left:1293px;top:1380px;width:219px;height:33px;line-height:33px;text-align:left;padding-left:13px">(45) 1.2000</div>
<div class="btn" style="left:1577px;top:1380px;width:210px;height:33px;line-height:33px;color:#fff;font-weight:normal;-webkit-text-stroke:0.35px #fff;background:linear-gradient(#4a95f2,#0d5ccf);border:1px solid #0a4aa8;border-radius:5px;font-size:18.5px">Apply</div>
<div class="btn" style="left:1840px;top:1381px;width:208px;height:32px;line-height:32px;background:#e6e6e6;border-radius:5px;font-size:18.5px">Cancel</div>
<!-- select chevrons -->
<svg class="a" style="left:409px;top:1390px" width="16" height="12" viewBox="0 0 16 12"><path d="M2 3 L8 9 L14 3" stroke="#111" stroke-width="2.2" fill="none"/></svg>
<svg class="a" style="left:1492px;top:1390px" width="16" height="12" viewBox="0 0 16 12"><path d="M2 3 L8 9 L14 3" stroke="#111" stroke-width="2.2" fill="none"/></svg>

<div id="status" class="a"></div>
<div class="st" style="left:15px;font-weight:bold">Nodes: 276 | Elemen…</div>
<div class="sep" style="left:209px"></div>
<div class="st" style="left:226px;font-weight:bold">Selection:</div>
<div class="a" style="left:313px;top:1424px;width:58px;height:23px;border:1px solid #d6d6d6;border-radius:3px;background:#e3e3e3;color:#8a8a8a;font-size:16.5px;text-align:center;line-height:21px">Node</div>
<div class="a" style="left:379px;top:1424px;width:79px;height:23px;border:1px solid #c8c8c8;border-radius:3px;background:#fff;color:#111;font-size:16.5px;text-align:center;line-height:21px">Element</div>
<div class="sep" style="left:480px"></div>
<div class="st" style="left:518px">Font Size</div>
<div class="a" style="left:594px;top:1423px;width:60px;height:26px;border:2.5px solid #111;border-radius:5px;background:#fff"></div>
<div class="st" style="left:606px;top:1426px">16</div>
<svg class="a" style="left:630px;top:1430px" width="16" height="12" viewBox="0 0 16 12"><path d="M2 3 L8 9 L14 3" stroke="#111" stroke-width="2" fill="none"/></svg>
<div class="st" style="left:669px">Line Width</div>
<div class="a" style="left:753px;top:1423px;width:59px;height:25px;border:1px solid #bbb;border-radius:4px;background:#fff"></div>
<div class="st" style="left:764px;top:1426px">5</div>
<svg class="a" style="left:789px;top:1430px" width="16" height="12" viewBox="0 0 16 12"><path d="M2 3 L8 9 L14 3" stroke="#111" stroke-width="2" fill="none"/></svg>
<div class="sep" style="left:831px"></div>
<div class="cb" style="left:862px"></div><svg class="a" style="left:862px;top:1426px" width="18" height="18" viewBox="0 0 18 18"><path d="M3.5 9.5 L7.5 13.5 L14.5 4.5" stroke="#fff" stroke-width="2.4" fill="none"/></svg>
<div class="st" style="left:891px">Axis</div>
<div class="cbo" style="left:940px"></div>
<div class="st" style="left:968px">Node ID</div>
<div class="cbo" style="left:1048px"></div>
<div class="st" style="left:1075px">Element ID</div>
<div class="cbo" style="left:1175px"></div>
<div class="st" style="left:1202px">Local Axes</div>
<div class="cb" style="left:1301px"></div><svg class="a" style="left:1301px;top:1426px" width="18" height="18" viewBox="0 0 18 18"><path d="M3.5 9.5 L7.5 13.5 L14.5 4.5" stroke="#fff" stroke-width="2.4" fill="none"/></svg>
<div class="st" style="left:1329px">Connections</div>
<div class="cb" style="left:1440px"></div><svg class="a" style="left:1440px;top:1426px" width="18" height="18" viewBox="0 0 18 18"><path d="M3.5 9.5 L7.5 13.5 L14.5 4.5" stroke="#fff" stroke-width="2.4" fill="none"/></svg>
<div class="st" style="left:1467px">Loads</div>
<div class="cb" style="left:1531px"></div><svg class="a" style="left:1531px;top:1426px" width="18" height="18" viewBox="0 0 18 18"><path d="M3.5 9.5 L7.5 13.5 L14.5 4.5" stroke="#fff" stroke-width="2.4" fill="none"/></svg>
<div class="st" style="left:1558px">Fixities</div>
<div class="cb" style="left:1629px"></div><svg class="a" style="left:1629px;top:1426px" width="18" height="18" viewBox="0 0 18 18"><path d="M3.5 9.5 L7.5 13.5 L14.5 4.5" stroke="#fff" stroke-width="2.4" fill="none"/></svg>
<div class="st" style="left:1656px">Settlements</div>
<div class="cb" style="left:1762px"></div><svg class="a" style="left:1762px;top:1426px" width="18" height="18" viewBox="0 0 18 18"><path d="M3.5 9.5 L7.5 13.5 L14.5 4.5" stroke="#fff" stroke-width="2.4" fill="none"/></svg>
<div class="st" style="left:1790px">Masses</div>
<div class="a" style="left:1869.5px;top:1424.5px;width:23px;height:23px;border:1px solid #aaa;border-radius:4px;background:linear-gradient(#f4f4f4,#e2e2e2)"></div>
<div class="a" style="left:1893.5px;top:1424.5px;width:23px;height:23px;border:1px solid #aaa;border-radius:4px;background:linear-gradient(#f4f4f4,#e2e2e2)"></div>
<svg class="a" style="left:1874px;top:1429px" width="40" height="14" viewBox="0 0 40 14"><path d="M11.5 1.5 L3.5 7 L11.5 12.5 Z M26.5 1.5 L34.5 7 L26.5 12.5 Z" fill="#222"/></svg>
<div class="sep" style="left:1932px"></div>
<div class="st" style="left:1957px">Memory: 4.78 MB</div>
</body></html>
